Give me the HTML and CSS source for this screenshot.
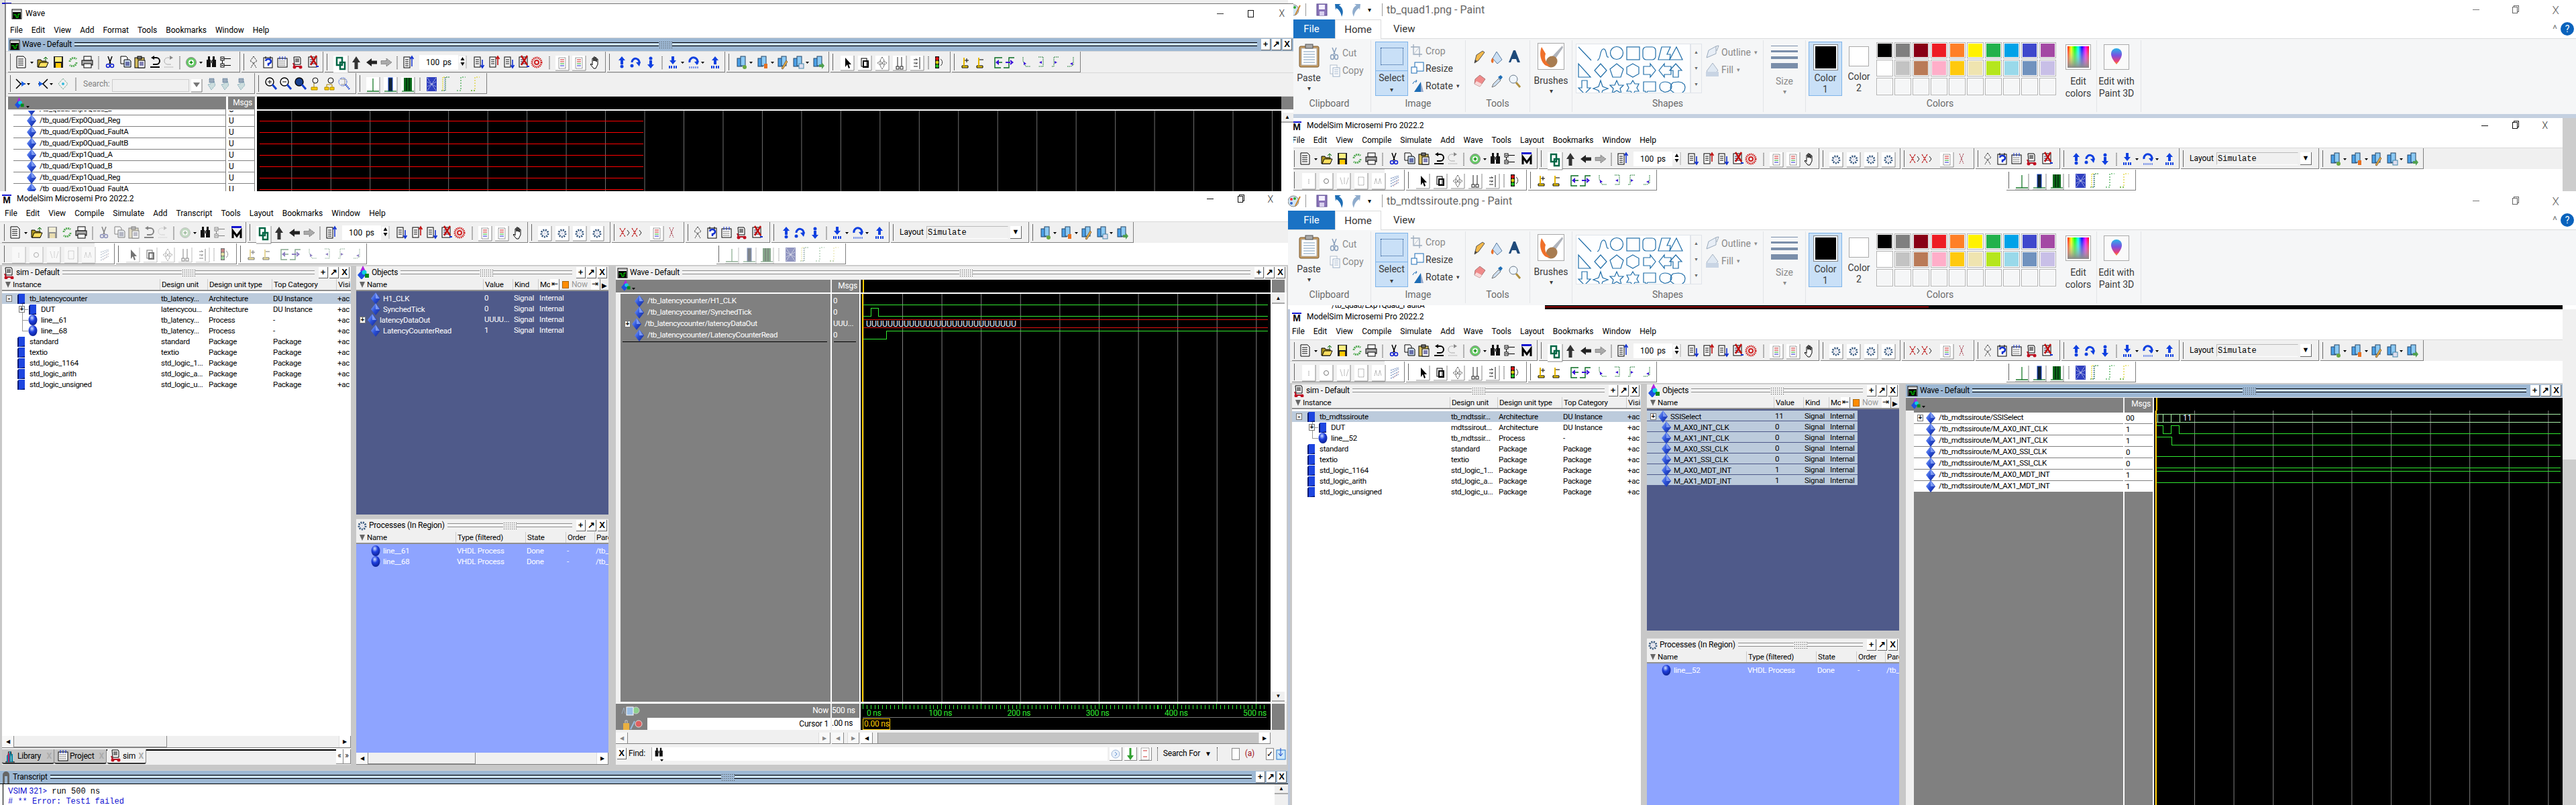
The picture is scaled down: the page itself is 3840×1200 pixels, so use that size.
FILE: index.html
```html
<!DOCTYPE html>
<html lang="en">
<head>
<meta charset="utf-8">
<title>ModelSim and Paint windows</title>
<link rel="stylesheet" href="styles.css">
</head>
<body>
<svg class="defs" width="0" height="0" aria-hidden="true"><defs>
<linearGradient id="bl" x1="0" y1="0" x2="1" y2="1"><stop offset="0" stop-color="#8fb0ff"/><stop offset=".5" stop-color="#2a50d8"/><stop offset="1" stop-color="#14248a"/></linearGradient>
<radialGradient id="bb" cx=".4" cy=".3" r=".8"><stop offset="0" stop-color="#cfe0ff"/><stop offset=".4" stop-color="#2040e0"/><stop offset="1" stop-color="#081a80"/></radialGradient>
<linearGradient id="rb"><stop offset="0" stop-color="#f00"/><stop offset=".17" stop-color="#ff0"/><stop offset=".34" stop-color="#0f0"/><stop offset=".5" stop-color="#0ff"/><stop offset=".67" stop-color="#00f"/><stop offset=".84" stop-color="#f0f"/><stop offset="1" stop-color="#f00"/></linearGradient>
<linearGradient id="rg" x1="0" y1="0" x2="0" y2="1"><stop offset="0" stop-color="#fff" stop-opacity="0"/><stop offset="1" stop-color="#888"/></linearGradient>
<linearGradient id="p3" x1="0" y1="0" x2="0" y2="1"><stop offset="0" stop-color="#27b5e8"/><stop offset=".45" stop-color="#7a50e0"/><stop offset=".8" stop-color="#e8407a"/><stop offset="1" stop-color="#f9a020"/></linearGradient>

<g id="dia"><path d="M7 0L14 9L7 18L0 9Z" fill="url(#bl)"/><path d="M7 1L13 9H7Z" fill="#a8c0ff" opacity=".65"/></g>
<g id="ball"><ellipse cx="7" cy="8" rx="6.5" ry="8" fill="url(#bb)"/></g>
<g id="cube"><rect x="2" width="9" height="15" fill="#1e46e0"/><path d="M0 2L2 0V15H0Z" fill="#0a1a70"/><path d="M2 15L11 13V15Z" fill="#0a1a70"/></g>
<g id="objs"><path d="M8 0L12 8H4Z" fill="#b020e0"/><path d="M6 7L12 14L6 21L0 14Z" fill="#1e50e0"/><circle cx="10" cy="10" r="3.5" fill="#10d0e0"/><rect x="11" y="12" width="6" height="6" fill="#0a8a1a"/></g>
<g id="wic"><rect width="14" height="14" fill="#fff" stroke="#000"/><rect x="1" y="4" width="12" height="10" fill="#000"/><path d="M2 8h4v4h3V7h3" stroke="#0f0" fill="none"/><path d="M1 2h12" stroke="#888"/></g>
<g id="cart"><path d="M3 1h9l1 2v9H4z" fill="#fff" stroke="#000"/><path d="M5 4h6M5 6h6M5 8h6" stroke="#000"/><path d="M2 10l2 5h9" stroke="#b01020" stroke-width="2" fill="none"/><circle cx="4" cy="16" r="2.5" fill="#c01020"/><circle cx="13" cy="16" r="2.5" fill="#c01020"/></g>
<g id="gearp"><circle cx="7" cy="10" r="5" fill="none" stroke="#3a5a80" stroke-width="3" stroke-dasharray="2 1.4"/><circle cx="7" cy="10" r="2" fill="#dde"/></g>

<g id="dd"><path d="M0 0h5L2.5 3z" fill="#000"/></g>
<g id="vs"><path d="M0 0v19" stroke="#000" stroke-dasharray="1 1"/></g>
<g id="doc"><path d="M2 1h10l3 3v14H2z" fill="#fff" stroke="#000"/><path d="M4 5h8M4 8h8M4 11h8M4 14h8" stroke="#000"/></g>
<g id="open"><path d="M1 17V6h5l1 2h7v9z" fill="#b09820" stroke="#000"/><path d="M2 17l3-7h12l-3 7z" fill="#ffe060" stroke="#000"/><path d="M10 5l3-3 3 3M13 2v5" stroke="#060" fill="none"/></g>
<g id="save"><rect x="2" y="1" width="14" height="17" fill="#222"/><rect x="4" y="2" width="10" height="7" fill="#ffef80"/><rect x="5" y="11" width="8" height="7" fill="#ffc800"/></g>
<g id="reload"><path d="M4 9a6 6 0 0 1 10-4M14 10a6 6 0 0 1-10 4" stroke="#50a850" stroke-width="3" stroke-dasharray="2 1" fill="none"/></g>
<g id="print"><rect x="4" y="1" width="11" height="6" fill="#fff" stroke="#000"/><rect x="1" y="7" width="16" height="7" fill="#aaa" stroke="#000"/><rect x="4" y="12" width="11" height="6" fill="#fff" stroke="#000"/></g>
<g id="cut"><path d="M6 1l4 11M12 1L8 12" stroke="#000" stroke-width="1.5"/><circle cx="6" cy="15" r="2.5" fill="none" stroke="#1020d0" stroke-width="1.5"/><circle cx="12" cy="15" r="2.5" fill="none" stroke="#1020d0" stroke-width="1.5"/></g>
<g id="copy"><path d="M2 1h8l2 2v9H2z" fill="#fff" stroke="#000"/><path d="M7 6h8l2 2v9H7z" fill="#cde" stroke="#000"/><path d="M9 10h6M9 12h6M9 14h6" stroke="#006"/></g>
<g id="paste"><rect x="2" y="3" width="14" height="15" fill="#d8c060" stroke="#000"/><rect x="6" y="1" width="6" height="4" fill="#777" stroke="#000"/><rect x="7" y="7" width="10" height="11" fill="#fff" stroke="#000"/><path d="M9 10h6M9 12h6M9 14h6" stroke="#006"/></g>
<g id="undo"><path d="M7 3H11A5 5 0 0 1 11 13H6" fill="none" stroke="#000" stroke-width="2"/><path d="M8 0v6L3 3z" fill="#000"/><path d="M2 17h14" stroke="#000" stroke-width="2"/></g>
<g id="redo"><path d="M11 3H7A5 5 0 0 0 7 13H12" fill="none" stroke="#666" stroke-dasharray="1 1"/><path d="M10 0v6l5-3z" fill="#888"/><path d="M2 17h14" stroke="#888" stroke-dasharray="1 1"/></g>
<g id="add"><circle cx="9" cy="10" r="7.5" fill="#66cc66" stroke="#888"/><circle cx="9" cy="10" r="4" fill="#fff"/><path d="M9 7.5v5M6.5 10h5" stroke="#080" stroke-width="1.5"/></g>
<g id="bino"><rect x="2" y="6" width="6" height="11" fill="#111"/><rect x="10" y="6" width="6" height="11" fill="#111"/><rect x="4" y="1" width="3" height="6" fill="#111"/><rect x="11" y="1" width="3" height="6" fill="#111"/><rect x="7" y="7" width="4" height="4" fill="#555"/></g>
<g id="tree"><rect x="1" y="2" width="5" height="5" fill="#fff" stroke="#000"/><rect x="1" y="12" width="5" height="5" fill="#fff" stroke="#000"/><path d="M3.5 7v5M6 4.5h10M6 14.5h10M2 4.5h3M2 14.5h3" stroke="#000"/></g>
<g id="mlg"><rect x="1" y="0" width="15" height="3" fill="#1414d0"/><path d="M3 18V7l6 8 6-8v11" fill="none" stroke="#000" stroke-width="3"/></g>

<g id="spark"><path d="M9 1L4 8l5 3-4 7M9 1l5 7-5 3 4 7" fill="none" stroke="#222" stroke-dasharray="2 1"/></g>
<g id="help"><rect x="2" y="3" width="13" height="15" fill="#fff" stroke="#000"/><path d="M5 1v4M12 1v4" stroke="#000"/><path d="M5 8a4 3.5 0 1 1 4 4v3" fill="none" stroke="#1030d0" stroke-width="2.5"/></g>
<g id="cal"><rect x="2" y="4" width="14" height="13" fill="#fff" stroke="#000"/><path d="M4 8h10M4 11h10M4 14h10" stroke="#000" stroke-dasharray="1 1"/><path d="M5 1v5M9 1v5M13 1v5" stroke="#1030d0"/></g>
<g id="xdoc"><rect x="2" y="2" width="12" height="15" fill="#fff" stroke="#000"/><path d="M4 6h8M4 9h8M4 12h8" stroke="#003"/><path d="M5 0l9 14M14 0L5 14" stroke="#c01010" stroke-width="2.5"/><path d="M13 16h4" stroke="#1030d0" stroke-width="2"/></g>

<g id="chain"><rect width="22" height="26" x="-2" y="-2" fill="#fff"/><path d="M20-2V24H-2" fill="none" stroke="#888"/><rect x="3" y="1" width="8" height="11" fill="none" stroke="#064" stroke-width="2.5"/><rect x="8" y="8" width="7" height="10" fill="none" stroke="#064" stroke-width="2.5"/></g>
<g id="up"><path d="M9 1l6 9h-3.5v10h-5V10H3z" fill="#333"/></g>
<g id="lf"><path d="M1 10l8-6v3.5h8v5H9V16z" fill="#222"/></g>
<g id="rt"><path d="M17 10L9 4v3.5H1v5h8V16z" fill="#aaa" stroke="#555" stroke-dasharray="1 1"/></g>
<g id="dcol"><rect x="2" y="2" width="9" height="16" fill="#fff" stroke="#000"/><path d="M4 6h5M4 9h5M4 12h5M4 15h5" stroke="#000"/><path d="M14 16V3M11.5 5L14 1l2.5 4" fill="none" stroke="#1030d0" stroke-width="1.5"/></g>
<g id="sdn"><rect x="2" y="2" width="9" height="15" fill="#fff" stroke="#000"/><path d="M4 6h5M4 9h5M4 12h5" stroke="#000"/><path d="M14 6v11M11.5 14l2.5 4 2.5-4" fill="none" stroke="#1030d0" stroke-width="1.6"/></g>
<g id="sup"><rect x="2" y="2" width="9" height="15" fill="#fff" stroke="#000"/><path d="M4 6h5M4 9h5M4 12h5" stroke="#000"/><path d="M14 14V3M11.5 5L14 1l2.5 4" fill="none" stroke="#c01010" stroke-width="1.6"/></g>
<g id="redc"><circle cx="9" cy="10" r="7" fill="none" stroke="#d02020" stroke-width="3" stroke-dasharray="1.5 1"/><circle cx="9" cy="10" r="3" fill="none" stroke="#d02020" stroke-width="2"/></g>
<g id="wbt"><rect x="-1" width="20" height="22" fill="#fff"/><path d="M19 0V22H-1" fill="none" stroke="#888"/><rect x="4" y="3" width="10" height="16" fill="none" stroke="#444" stroke-dasharray="1 1"/><path d="M6 6h6M6 9h6" stroke="#c22"/><path d="M6 12h6" stroke="#2a2"/><path d="M6 15h6" stroke="#22c"/></g>
<g id="hand"><path d="M5 9V4h2v4V2h2v6V3h2v6V5h2v8l-3 6H7l-5-6 1-1 2 2z" fill="#fff" stroke="#000"/></g>
<g id="gb"><rect x="-1" width="20" height="22" fill="#fff"/><path d="M19 0V22H-1" fill="none" stroke="#888"/><use href="#gearp" x="2" y="1"/></g>
<g id="xx"><path d="M2 3l8 13M10 3L2 16" stroke="#c02020" stroke-width="1.3" stroke-dasharray="3 1"/><path d="M13 6l3 4-3 4" fill="none" stroke="#222"/></g>

<g id="dbl"><circle cx="9" cy="16" r="2.5" fill="#1040e0"/><path d="M9 1l5 6h-3v6H7V7H4z" fill="#1040e0"/></g>
<g id="ubl"><path d="M4 10a5.5 5.5 0 1 1 10 3" fill="none" stroke="#1040e0" stroke-width="3"/><path d="M10 10l5 6 2-7z" fill="#1040e0"/><circle cx="4" cy="15" r="2.5" fill="#1040e0"/></g>
<g id="dbar"><path d="M9 1l5 6h-3v6H7V7H4z" fill="#1040e0" transform="rotate(180 9 7)"/><path d="M4 15v4M7 15v4M11 15v4M14 15v4" stroke="#1040e0" stroke-width="2"/></g>
<g id="ubar"><path d="M9 1l5 6h-3v6H7V7H4z" fill="#1040e0"/><path d="M4 15v4M7 15v4M11 15v4M14 15v4" stroke="#1040e0" stroke-width="2"/></g>
<g id="cbar"><path d="M3 10a6 6 0 1 1 11 2" fill="none" stroke="#1040e0" stroke-width="3"/><path d="M10 9l4 5 3-6z" fill="#1040e0"/><path d="M3 16v3M6 16v3M9 16v3M12 16v3M15 16v3" stroke="#1040e0"/></g>

<g id="lay"><rect x="1" y="3" width="7" height="12" fill="#4aa0e8" stroke="#246"/><rect x="6" y="0" width="7" height="14" fill="#8ccaf4" stroke="#246"/></g>

<g id="ptr"><rect x="-1" width="20" height="22" fill="#fff"/><path d="M19 0V22H-1" fill="none" stroke="#888"/><path d="M6 3v14l3-4 2 6 2-1-2-5h4z" fill="#000"/></g>
<g id="zbox"><rect x="-1" width="20" height="22" fill="#fff"/><path d="M19 0V22H-1" fill="none" stroke="#888"/><rect x="4" y="4" width="8" height="12" fill="none" stroke="#000"/><rect x="7" y="8" width="7" height="9" fill="none" stroke="#000" stroke-width="2"/></g>
<g id="mv"><rect x="-1" width="20" height="22" fill="#fff"/><path d="M19 0V22H-1" fill="none" stroke="#888"/><path d="M9 2l3 5-3 4-3-4zM9 11l3 4-3 5-3-5zM2 11l4-3v6zM16 11l-4-3v6z" fill="#fff" stroke="#333" stroke-dasharray="1 .6"/></g>
<g id="bars"><rect x="-1" width="20" height="22" fill="#fff"/><path d="M19 0V22H-1" fill="none" stroke="#888"/><path d="M6 2v14M12 2v14" stroke="#222"/><rect x="4" y="16" width="4" height="4" fill="none" stroke="#222"/><rect x="10" y="16" width="4" height="4" fill="none" stroke="#222"/></g>
<g id="lns"><rect x="-1" width="20" height="22" fill="#fff"/><path d="M19 0V22H-1" fill="none" stroke="#888"/><path d="M4 6h6M4 11h6M4 16h6M13 2v18" stroke="#222"/><path d="M9 6l-2-1.500M9 11l-2 1.500" stroke="#222"/></g>
<g id="tl"><rect x="3" y="1" width="6" height="18" fill="#111"/><circle cx="6" cy="4.500" r="2.400" fill="#e01010"/><circle cx="6" cy="10" r="2.400" fill="#d8d010"/><circle cx="6" cy="15.500" r="2.400" fill="#20c020"/><path d="M11 5a6 6 0 0 1 0 10" fill="none" stroke="#333"/></g>

<g id="fa"><path d="M3 18h9v-3H3zM6 15V3M6 7h7M10 4v6" stroke="#000" fill="#ffd800"/><path d="M6 15V3" stroke="#e8b800" stroke-width="2"/></g>
<g id="fb"><path d="M3 18h9v-3H3zM6 15V3M6 6h7" stroke="#000" fill="#ffd800"/><path d="M6 15V3" stroke="#e8b800" stroke-width="2"/></g>
<g id="gl"><path d="M15 3H4v15h9M7 10h8" stroke="#086c20" stroke-width="1.400" fill="none"/><path d="M5 10l5-4v8z" fill="#3a10d8"/></g>
<g id="gr"><path d="M1 18h8V3h8" stroke="#086c20" stroke-width="1.400" fill="none"/><path d="M16 10l-5-4v8zM4 9h8v2H4z" fill="#3a10d8"/></g>
<g id="d1"><path d="M4 2v6l4 8h7" fill="none" stroke="#086c20" stroke-dasharray="1.500 1"/><path d="M5 9l4 3-4 2z" fill="#3a10d8"/></g>
<g id="d2"><path d="M6 2h7v14H6" fill="none" stroke="#086c20" stroke-dasharray="1.500 1"/><path d="M7 10l4-2v4z" fill="#3a10d8"/></g>
<g id="d3"><path d="M14 2H7v14H3" fill="none" stroke="#086c20" stroke-dasharray="1.500 1"/><path d="M12 10L8 8v4z" fill="#3a10d8"/></g>
<g id="d4"><path d="M14 2v12l-4 2H4" fill="none" stroke="#086c20" stroke-dasharray="1.500 1"/><path d="M9 12l4-2v4z" fill="#3a10d8"/></g>

<g id="pb"><rect x="-1" width="20" height="24" fill="#fff"/><path d="M19 0V24H-1" fill="none" stroke="#888"/></g>
<g id="hatch"><path d="M3 6l12-4M3 10l12-6M3 14l12-6M3 18l12-6" stroke="#8aa0c8" stroke-width="1.500" stroke-dasharray="2 1"/><path d="M7 18l9-11" stroke="#d88" stroke-dasharray="1 1"/></g>

<g id="inw"><path d="M2 3l7 7-7 7M8 10h8" fill="none" stroke="#000" stroke-width="1.500"/><path d="M10 6l6 4-6 4z" fill="#1860e8"/></g>
<g id="outw"><path d="M16 3L9 10l7 7M2 10h8" fill="none" stroke="#000" stroke-width="1.500"/><path d="M3 6l6 4-6 4z" fill="#1860e8"/></g>
<g id="dot3"><path d="M9 2l7 8-7 8-7-8z" fill="none" stroke="#486" stroke-dasharray="1 1"/><circle cx="9" cy="10" r="2" fill="#3bd"/></g>
<g id="zi"><circle cx="7" cy="7" r="6" fill="#fff" stroke="#000" stroke-width="1.400"/><path d="M4 7h6M7 4v6" stroke="#000"/><path d="M11 11l6 7" stroke="#1440d0" stroke-width="3"/></g>
<g id="zo"><circle cx="7" cy="7" r="6" fill="#fff" stroke="#000" stroke-width="1.400"/><path d="M4 7h6" stroke="#000"/><path d="M11 11l6 7" stroke="#1440d0" stroke-width="3"/></g>
<g id="zf"><circle cx="7" cy="7" r="6" fill="#184090" stroke="#000" stroke-width="1.400"/><path d="M11 11l6 7" stroke="#1440d0" stroke-width="3"/></g>
<g id="zc"><circle cx="9" cy="5" r="4" fill="#fff" stroke="#000"/><path d="M7 9v6M3 15h9v4H3z" fill="#fc0" stroke="#a80"/></g>
<g id="zd"><circle cx="10" cy="5" r="4" fill="#fff" stroke="#000"/><path d="M4 11h8M4 11v4M12 11v4M1 15h6v4H1zM9 15h6v4H9z" fill="#fc0" stroke="#a80"/></g>
<g id="zs"><circle cx="7" cy="7" r="6" fill="none" stroke="#1440d0" stroke-dasharray="1.500 1"/><path d="M11 11l6 7" stroke="#1440d0" stroke-dasharray="1.500 1" stroke-width="2.500"/><path d="M4 3h6v8H4" fill="none" stroke="#333" stroke-dasharray="1 1"/></g>
<g id="sb1"><path d="M5 11l5 8 6-7-2-6-3 1-2 3z" fill="#cdd" stroke="#69a" stroke-dasharray="1 1"/><path d="M7 2h7v6H7z" fill="#9ab" stroke="#468" stroke-dasharray="1 1"/></g>

<g id="wa"><rect x="-1" width="20" height="24" fill="#fff"/><path d="M19 0V24H-1" fill="none" stroke="#888"/><path d="M9 2v19M0 21h18" stroke="#1a7a2a" stroke-width="1.300"/></g>
<g id="wb"><rect x="-1" width="20" height="24" fill="#fff"/><path d="M19 0V24H-1" fill="none" stroke="#888"/><rect x="6" y="1" width="6" height="20" fill="#123" stroke="#1444c8"/><path d="M0 21h18" stroke="#1a7a2a" stroke-width="1.300"/></g>
<g id="wc"><rect x="-1" width="20" height="24" fill="#fff"/><path d="M19 0V24H-1" fill="none" stroke="#888"/><rect x="3" y="1" width="12" height="20" fill="#0a6a1a"/><path d="M7 1v20M11 1v20" stroke="#000"/><path d="M0 21h18" stroke="#1a7a2a" stroke-width="1.300"/></g>
<g id="wh"><rect x="2" y="2" width="15" height="21" fill="#3040c0"/><path d="M3 3l13 19M16 3L3 22M3 9l13 7M16 9L3 16" stroke="#fff" stroke-dasharray="1 1"/></g>
<g id="we"><path d="M3 22h6V2h7" fill="none" stroke="#1a7a2a" stroke-dasharray="2 1"/><path d="M5 22V2h3M14 22" fill="none" stroke="#e0d000" stroke-dasharray="2 1"/><path d="M8 3v19" stroke="#2040d0" stroke-dasharray="1 2"/></g>
<g id="wf"><path d="M3 22h6V2h7" fill="none" stroke="#1a9a2a" stroke-dasharray="2 2"/></g>
<g id="wgg"><path d="M3 22h6V2h7" fill="none" stroke="#d8c800" stroke-dasharray="2 2"/><path d="M3 22h6" stroke="#1a9a2a" stroke-dasharray="2 2"/></g>

<g id="g-file"><use href="#doc" x="11" y="6"/><use href="#dd" x="33" y="15"/><use href="#open" x="43" y="6"/><use href="#save" x="66" y="6"/><use href="#reload" x="88" y="6"/><use href="#print" x="109" y="6"/><use href="#vs" x="135" y="7"/><use href="#cut" x="143" y="6"/><use href="#copy" x="166" y="6"/><use href="#paste" x="187" y="6"/><use href="#undo" x="210" y="6"/><use href="#redo" x="231" y="6"/><use href="#vs" x="256" y="7"/><use href="#add" x="264" y="6"/><use href="#dd" x="285" y="15"/><use href="#bino" x="294" y="6"/><use href="#tree" x="316" y="6"/></g>
<g id="g-filed"><use href="#doc" x="11" y="6"/><use href="#dd" x="33" y="15"/><use href="#open" x="43" y="6"/><g class="gh"><use href="#save" x="66" y="6"/></g><use href="#reload" x="88" y="6"/><use href="#print" x="109" y="6"/><use href="#vs" x="135" y="7"/><g class="gh"><use href="#cut" x="143" y="6"/><use href="#copy" x="166" y="6"/><use href="#paste" x="187" y="6"/><use href="#undo" x="210" y="6"/><use href="#redo" x="231" y="6"/></g><use href="#vs" x="256" y="7"/><g class="gh"><use href="#add" x="264" y="6"/></g><use href="#dd" x="285" y="15"/><use href="#bino" x="294" y="6"/><g class="gh"><use href="#tree" x="316" y="6"/></g></g>
<g id="g-help"><use href="#spark" x="9" y="6"/><use href="#help" x="31" y="6"/><use href="#cal" x="52" y="6"/><use href="#cart" x="75" y="7"/><use href="#xdoc" x="98" y="6"/></g>
<g id="g-nav1"><use href="#chain" x="15" y="8"/><use href="#up" x="38" y="6"/><use href="#lf" x="61" y="6"/><use href="#rt" x="83" y="6"/><use href="#vs" x="108" y="7"/><use href="#dcol" x="116" y="6"/></g>
<g id="g-nav2"><rect x="1" y="7" width="11" height="9" fill="#fff"/><path d="M6.500 8l-3 5h6zM3.500 16h6l-3 5z" fill="#000"/><path d="M12 6v19" stroke="#aaa"/><use href="#sdn" x="22" y="6"/><use href="#sup" x="45" y="6"/><use href="#sdn" x="67" y="6"/><use href="#xdoc" x="89" y="6"/><use href="#redc" x="108" y="6"/><use href="#vs" x="136" y="7"/><use href="#wbt" x="146" y="6"/><use href="#wbt" x="171" y="6"/><use href="#hand" x="195" y="6"/></g>
<g id="g-step"><use href="#dbl" x="13" y="6"/><use href="#ubl" x="33" y="6"/><use href="#dbl" x="56" y="6" transform="rotate(180 65 16)"/><use href="#vs" x="82" y="7"/><use href="#dbar" x="89" y="6"/><use href="#dd" x="110" y="15"/><use href="#cbar" x="120" y="6"/><use href="#dd" x="140" y="15"/><use href="#ubar" x="152" y="6"/></g>
<g id="g-lay"><use href="#lay" x="15" y="7"/><circle cx="27" cy="23" r="3" fill="#6aa840"/><use href="#dd" x="34" y="15"/><use href="#lay" x="46" y="7"/><rect x="56" y="18" width="5" height="7" fill="#e87020"/><use href="#dd" x="66" y="15"/><use href="#lay" x="76" y="7"/><path d="M82 25l7-12 2 2-7 11z" fill="#e8b040" stroke="#864"/><use href="#lay" x="99" y="7"/><rect x="108" y="18" width="7" height="7" fill="#dde" stroke="#48a"/><use href="#dd" x="118" y="15"/><use href="#lay" x="129" y="7"/><path d="M138 19h4v-3l4 5-4 5v-3h-4z" fill="#50a050"/></g>
<g id="g-sel"><use href="#ptr" x="16" y="6"/><use href="#zbox" x="42" y="6"/><use href="#mv" x="68" y="6"/><use href="#bars" x="94" y="6"/><use href="#lns" x="120" y="6"/><use href="#vs" x="146" y="7"/><use href="#tl" x="153" y="6"/></g>
<g id="g-flag"><use href="#fa" x="12" y="6"/><use href="#fb" x="34" y="6"/><use href="#gl" x="60" y="6"/><use href="#gr" x="76" y="6"/><use href="#d1" x="102" y="6"/><use href="#d2" x="123" y="6"/><use href="#d3" x="145" y="6"/><use href="#d4" x="167" y="6"/></g>
<g id="g-search"><use href="#inw" x="10" y="6"/><use href="#dd" x="28" y="15"/><use href="#outw" x="43" y="6"/><use href="#dd" x="62" y="15"/><use href="#dot3" x="73" y="6"/><use href="#vs" x="101" y="7"/></g>
<g id="g-sr2"><rect x="0" y="9" width="16" height="19" fill="#fff"/><path d="M16 9v19H0" fill="none" stroke="#777"/><path d="M3 14h10l-5 7z" fill="#777"/><use href="#sb1" x="20" y="6"/><use href="#sb1" x="40" y="6"/><use href="#sb1" x="64" y="6"/></g>
<g id="g-zoom"><use href="#zi" x="13" y="6"/><use href="#zo" x="35" y="6"/><use href="#zf" x="57" y="6"/><use href="#zc" x="79" y="6"/><use href="#zd" x="101" y="6"/><use href="#zs" x="122" y="6"/></g>
<g id="g-wave"><use href="#wa" x="14" y="6"/><use href="#wb" x="40" y="6"/><use href="#wc" x="66" y="6"/><use href="#vs" x="93" y="7"/><use href="#wh" x="101" y="4"/><use href="#we" x="122" y="4"/><use href="#wf" x="145" y="4"/><use href="#wgg" x="166" y="4"/></g>
<g id="g-gear"><use href="#gb" x="14" y="6"/><use href="#gb" x="40" y="6"/><use href="#gb" x="66" y="6"/><use href="#gb" x="92" y="6"/></g>
<g id="g-xx"><use href="#xx" x="10" y="6"/><use href="#xx" x="28" y="6"/><use href="#wbt" x="58" y="6"/><path d="M86 8l6 15M92 8l-6 15" stroke="#a03040" stroke-dasharray="2 1"/></g>
<g id="g-pins"><use href="#pb" x="16" y="5"/><path d="M25 14v8" stroke="#777" stroke-dasharray="1 1"/><use href="#pb" x="42" y="5"/><circle cx="51" cy="17" r="3.500" fill="none" stroke="#777"/><use href="#pb" x="68" y="5"/><path d="M72 12l3 10M78 12v10M84 12l-3 10" fill="none" stroke="#777" stroke-dasharray="1 1"/><use href="#pb" x="94" y="5"/><rect x="99" y="11" width="8" height="12" fill="none" stroke="#777" stroke-dasharray="1 1"/><use href="#pb" x="120" y="5"/><path d="M123 21l2-8 2 8M129 21l2-8 2 8" fill="none" stroke="#777" stroke-dasharray="1 1"/><use href="#hatch" x="144" y="7"/></g>

<g id="p-app"><circle cx="8" cy="8" r="8" fill="#cfe4f4" stroke="#888"/><circle cx="5" cy="5" r="2" fill="#e33"/><circle cx="10" cy="4" r="2" fill="#3a3"/><circle cx="5" cy="11" r="2" fill="#36c"/><path d="M11 15l7-14" stroke="#c83" stroke-width="2"/></g>
<g id="p-save"><rect x="1" y="1" width="15" height="17" fill="#8a74b8" stroke="#5a4a90"/><rect x="4" y="2" width="9" height="7" fill="#f4f0ff"/><rect x="5" y="12" width="7" height="6" fill="#d8d0ee"/></g>
<g id="p-undo"><path d="M3 1h9l-3 2c5 3 8 9 4 17-1-6-4-11-8-13l-1 3z" fill="#1d6db5"/></g>
<g id="p-redo"><path d="M15 1H6l3 2C4 6 1 12 5 20c1-6 4-11 8-13l1 3z" fill="#8faccd"/></g>
<g id="p-paste"><rect x="1" y="3" width="29" height="31" rx="2" fill="#c49a60" stroke="#7a5a30"/><rect x="4" y="6" width="23" height="25" fill="#fff" stroke="#aaa"/><path d="M7 11h17M7 15h17M7 19h17M7 23h17M7 27h17" stroke="#7a9ab8"/><rect x="10" y="0" width="11" height="6" fill="#aaa" stroke="#555"/></g>
<g id="p-cut"><path d="M4 1l4 10M10 1L6 11" stroke="#8aa0bc" stroke-width="1.500"/><ellipse cx="4" cy="15" rx="2.500" ry="3.500" fill="none" stroke="#8aa0bc" stroke-width="1.500"/><ellipse cx="10" cy="15" rx="2.500" ry="3.500" fill="none" stroke="#8aa0bc" stroke-width="1.500"/></g>
<g id="p-copy"><rect x="1" y="1" width="10" height="13" fill="#fff" stroke="#b0bccc"/><rect x="5" y="5" width="10" height="13" fill="#fff" stroke="#9cb0c8"/><path d="M7 8h6M7 11h6M7 14h6" stroke="#9cb0c8"/></g>
<g id="p-crop"><path d="M4 0v15h13M0 4h13v15" fill="none" stroke="#9aaabc" stroke-width="1.300"/><path d="M4 15L13 4" stroke="#bcc6d2"/></g>
<g id="p-resize"><rect x="6" y="1" width="13" height="13" fill="#fff" stroke="#1d6db5"/><rect x="1" y="8" width="8" height="9" fill="#fff" stroke="#1d6db5"/></g>
<g id="p-rotate"><path d="M5 19L15 4v15z" fill="#1d6db5"/><path d="M15 4l4 15h-4z" fill="#9ac"/><path d="M3 7c1-3 3-4 5-4M8 1l1 2-2 2" fill="none" stroke="#1d6db5"/></g>
<g id="p-pencil"><path d="M3 19l3-12L15 1l3 2-9 12z" fill="#f2b84a" stroke="#555"/><path d="M3 19l1-5 3 2z" fill="#444"/></g>
<g id="p-fill"><path d="M9 2l8 12-7 6-7-8z" fill="#cce0f4" stroke="#5a7ca0"/><path d="M3 11c-3 3-3 7 0 8 2-1 2-5 0-8z" fill="#e8702a"/></g>
<g id="p-a"><path d="M0 18L7 0h3l7 18h-4l-2-5H5l-2 5z" fill="#1f4a7a"/></g>
<g id="p-erase"><path d="M4 7l7-6 8 6-8 11-8-4z" fill="#f08a8a" stroke="#a77"/><path d="M3 14l8 4 3-4-8-4z" fill="#f8d8d8"/></g>
<g id="p-pick"><path d="M2 19l2-5L12 6l3 3-8 8z" fill="#cde" stroke="#777"/><path d="M11 4l4-3 3 3-3 4z" fill="#1d6db5"/></g>
<g id="p-mag"><circle cx="7" cy="7" r="6" fill="#f0f6fc" stroke="#678"/><path d="M11 12l6 7" stroke="#b09040" stroke-width="3"/></g>
<g id="p-brush"><rect x=".500" y=".500" width="39" height="39" fill="#fff" stroke="#a8a8a8"/><path d="M37 4L21 21l4 5 13-19z" fill="#b0b4bc"/><ellipse cx="21" cy="28" rx="9" ry="8" fill="#a87c50" transform="rotate(-40 21 28)"/><path d="M6 6c-3 8-3 18 4 26 3 3 7 3 9 2-5-3-10-9-7-18z" fill="#f0702a"/></g>
<g id="p-out"><path d="M1 18l3-11L15 1v11z" fill="#e8eef6" stroke="#9aaabc"/><path d="M15 1l4-1-3 8" fill="none" stroke="#9aaabc"/></g>
<g id="p-fl"><path d="M10 0l8 11-5 5H5l-4-4z" fill="#dfe8f2" stroke="#a8b4c4"/><rect y="13" width="19" height="7" fill="#c8d4e4"/></g>
<g id="p-shapes" fill="none" stroke="#1f6da8" stroke-width="1.200">
<path d="M3 4l19 20M31 24c6-1 3-16 9-17s3 14 8 12"/><circle cx="60" cy="13" r="9.500"/><rect x="75" y="4" width="19" height="19"/><rect x="99" y="4" width="19" height="19" rx="5"/><path d="M122 23l5-19h13l-5 11h5l-1 8z"/><path d="M149 4l9 19h-19z"/>
<path d="M3 29v20h18zM36 29l9 10-9 10-9-10zM60 29l10 8-4 12H54l-4-12zM84 29l9 5v10l-9 5-9-5V34zM100 33h10v-4l8 10-8 10v-4h-10zM141 33h-10v-4l-8 10 8 10v-4h10zM148 29l9 10h-5v10h-8V39h-5z"/>
<path d="M8 54h8v11h5l-9 9-9-9h5zM36 54l3 9 8 3-8 3-3 9-3-9-8-3 8-3zM60 54l3 7h7l-5 5 2 7-7-4-7 4 2-7-5-5h7zM84 54l3 5h6l-3 6 3 5h-6l-3 6-3-6h-6l3-5-3-6h6zM100 56h18v14h-12l-3 5v-5h-3zM132 56c6 0 10 3 10 7s-4 8-9 8l-3 5 1-5c-4-1-7-4-7-8s3-7 8-7zM152 56l5 1 4 3 1 4-1 5-3 3-5 2-5-1-3-1-4-3-1-4 1-5 3-3z"/>
</g>
</defs></svg>

<div class="backstrip"><i class="dash"></i></div>
<div class="vtrack"></div>

<!-- Wave window -->
<section class="win w1">
  <div class="tb-title tall"><svg class="ttl-ic" width="16" height="16"><use href="#wic" x="1" y="1"/></svg><span>Wave</span><div class="ctl"><i class="mn"></i><i class="mx"></i><i class="cl">X</i></div></div>
  <nav class="menu tallm"><span>File</span><span>Edit</span><span>View</span><span>Add</span><span>Format</span><span>Tools</span><span>Bookmarks</span><span>Window</span><span>Help</span></nav>
  <div class="dockbar active w1-dock"><svg class="dk-ic" width="16" height="16"><use href="#wic" x="1" y="1"/></svg><span class="dk-t">Wave - Default</span><div class="grip"><b class="dots"></b></div><b class="db">+</b><b class="db">&#8599;</b><b class="db">X</b></div>
  <div class="tbr w1-r"><div class="tg g0"><svg width="345" height="31"><use href="#g-file"/></svg></div><div class="tg"><svg width="121" height="31"><use href="#g-help"/></svg></div>
    <div class="tg"><svg width="141" height="31"><use href="#g-nav1"/></svg><div class="spin">100 ps</div><svg width="219" height="31"><use href="#g-nav2"/></svg></div>
    <div class="tg"><svg width="175" height="31"><use href="#g-step"/></svg></div><div class="tg"><svg width="152" height="31"><use href="#g-lay"/></svg></div><div class="tg"><svg width="178" height="31"><use href="#g-sel"/></svg></div><div class="tg"><svg width="191" height="31"><use href="#g-flag"/></svg></div></div>
  <div class="tbr w1-r"><div class="tg"><svg width="112" height="31"><use href="#g-search"/></svg><div class="srch">Search:</div><div class="sinput"></div><svg width="94" height="31"><use href="#g-sr2"/></svg></div><div class="tg"><svg width="148" height="31"><use href="#g-zoom"/></svg></div><div class="tg"><svg width="192" height="31"><use href="#g-wave"/></svg></div></div>
  <div class="w1-gap"></div>
  <div class="w1-main">
    <div class="w1-names">
      <div class="w1-hd gray"><svg width="22" height="19"><use href="#objs" transform="translate(10 1) scale(.8)"/><use href="#dd" x="27" y="14"/></svg></div>
      <div class="w1-rows">
        <div class="w1r"><svg width="14" height="16"><use href="#dia" y="-1"/></svg><span>/tb_quad/Exp0Quad_B</span></div>
        <div class="w1r"><svg width="14" height="16"><use href="#dia" y="-1"/></svg><span>/tb_quad/Exp0Quad_Reg</span></div>
        <div class="w1r"><svg width="14" height="16"><use href="#dia" y="-1"/></svg><span>/tb_quad/Exp0Quad_FaultA</span></div>
        <div class="w1r"><svg width="14" height="16"><use href="#dia" y="-1"/></svg><span>/tb_quad/Exp0Quad_FaultB</span></div>
        <div class="w1r"><svg width="14" height="16"><use href="#dia" y="-1"/></svg><span>/tb_quad/Exp1Quad_A</span></div>
        <div class="w1r"><svg width="14" height="16"><use href="#dia" y="-1"/></svg><span>/tb_quad/Exp1Quad_B</span></div>
        <div class="w1r"><svg width="14" height="16"><use href="#dia" y="-1"/></svg><span>/tb_quad/Exp1Quad_Reg</span></div>
        <div class="w1r"><svg width="14" height="16"><use href="#dia" y="-1"/></svg><span>/tb_quad/Exp1Quad_FaultA</span></div>
      </div>
    </div>
    <div class="w1-msgs"><div class="w1-hd gray hdm">Msgs</div><div class="w1-rows"><div class="w1m">U</div><div class="w1m">U</div><div class="w1m">U</div><div class="w1m">U</div><div class="w1m">U</div><div class="w1m">U</div><div class="w1m">U</div><div class="w1m">U</div></div></div>
    <div class="w1-wave"><div class="w1-hd blk"></div><div class="grid1"><svg class="trace" width="1527" height="120" shape-rendering="crispEdges"><path d="M4 15H576M4 32H576M4 49H576M4 66H576M4 83H576M4 100H576M4 117H576" stroke="#f00"/></svg></div></div>
    <div class="w1-sb"><div class="w1-sbh"></div><i class="up-btn">&#9650;</i></div>
  </div>
</section>

<!-- Paint, first -->
<section class="win paint pa">
  <div class="p-title"><svg class="qa" width="20" height="20"><use href="#p-app" y="2"/></svg><i class="p-sep s1"></i><svg class="qs" width="17" height="19"><use href="#p-save"/></svg><svg class="qu" width="18" height="20"><use href="#p-undo"/></svg><svg class="qr" width="18" height="20"><use href="#p-redo"/></svg><span class="qmore">&#9662;</span><i class="p-sep s2"></i><span class="p-name">tb_quad1.png - Paint</span><div class="ctl pctl"><i class="mn"></i><i class="rs"></i><i class="cl">X</i></div></div>
  <div class="p-tabs"><span class="p-file">File</span><span class="p-home">Home</span><span class="p-view">View</span><i class="p-caret">&#94;</i><i class="p-help">?</i></div>
  <div class="ribbon">
    <div class="rg r1"><div class="rc"><div class="big bp"><svg width="31" height="36"><use href="#p-paste"/></svg><span>Paste</span><em>&#9662;</em></div><div class="sm"><p class="off"><svg width="16" height="19"><use href="#p-cut"/></svg>Cut</p><p class="off"><svg width="16" height="19"><use href="#p-copy"/></svg>Copy</p></div></div><div class="rl">Clipboard</div></div>
    <div class="rg r2"><div class="rc"><div class="sel"><div class="sel-top"><i></i></div><div class="sel-bot"><span>Select</span><em>&#9662;</em></div></div><div class="sm"><p class="off"><svg width="19" height="20"><use href="#p-crop"/></svg>Crop</p><p><svg width="19" height="20"><use href="#p-resize"/></svg>Resize</p><p><svg width="19" height="20"><use href="#p-rotate"/></svg>Rotate <em>&#9662;</em></p></div></div><div class="rl">Image</div></div>
    <div class="rg r3"><div class="rc tools"><svg width="20" height="20"><use href="#p-pencil"/></svg><svg width="20" height="20"><use href="#p-fill"/></svg><svg width="20" height="20"><use href="#p-a"/></svg><svg width="20" height="20"><use href="#p-erase"/></svg><svg width="20" height="20"><use href="#p-pick"/></svg><svg width="20" height="20"><use href="#p-mag"/></svg></div><div class="rl">Tools</div></div>
    <div class="rg r4"><div class="rc"><div class="big bb"><svg width="40" height="40"><use href="#p-brush"/></svg><span>Brushes</span><em>&#9662;</em></div></div><div class="rl"></div></div>
    <div class="rg r5"><div class="rc"><div class="gal"><svg width="170" height="78"><use href="#p-shapes"/></svg></div><div class="galb"><i>&#9650;</i><i>&#9660;</i><i>&#9660;</i></div><div class="sm out"><p class="off"><svg width="20" height="20"><use href="#p-out"/></svg>Outline <em>&#9662;</em></p><p class="off"><svg width="20" height="20"><use href="#p-fl"/></svg>Fill <em>&#9662;</em></p></div></div><div class="rl">Shapes</div></div>
    <div class="rg r6"><div class="rc"><div class="big bs off"><div class="lines"><i></i><i></i><i></i><i></i></div><span>Size</span><em>&#9662;</em></div></div><div class="rl"></div></div>
    <div class="rg r7"><div class="rc"><div class="col1"><i class="swat"></i><span>Color<br>1</span></div><div class="col2"><i class="swat2"></i><span>Color<br>2</span></div><div class="pal"><i></i><i></i><i></i><i></i><i></i><i></i><i></i><i></i><i></i><i></i><i></i><i></i><i></i><i></i><i></i><i></i><i></i><i></i><i></i><i></i><i></i><i></i><i></i><i></i><i></i><i></i><i></i><i></i><i></i><i></i></div><div class="big be"><svg width="38" height="38"><rect x=".5" y=".5" width="37" height="37" fill="#fff" stroke="#aaa"/><rect x="3" y="3" width="32" height="32" fill="url(#rb)"/><rect x="3" y="3" width="32" height="32" fill="url(#rg)"/></svg><span>Edit<br>colors</span></div></div><div class="rl rlc">Colors</div></div>
    <div class="rg r8"><div class="rc"><div class="big be"><svg width="38" height="38"><rect x=".5" y=".5" width="37" height="37" fill="#fafafa" stroke="#aaa"/><path d="M19 30c-5-6-8-11-8-16a8 8 0 0 1 16 0c0 5-3 10-8 16z" fill="url(#p3)"/></svg><span>Edit with<br>Paint 3D</span></div></div><div class="rl"></div></div>
  </div>
</section>

<!-- ModelSim background, right -->
<section class="win ms mb">
  <div class="ms-title"><span class="mlogo">M</span><span>ModelSim Microsemi Pro 2022.2</span><div class="ctl mctl"><i class="mn dark"></i><i class="rs dark"></i><i class="cl dark">X</i></div></div>
  <nav class="menu msm"><span>File</span><span>Edit</span><span>View</span><span>Compile</span><span>Simulate</span><span>Add</span><span>Wave</span><span>Tools</span><span>Layout</span><span>Bookmarks</span><span>Window</span><span>Help</span></nav>
  <div class="tbr"><div class="tg"><svg width="365" height="31"><use href="#g-file"/><use href="#mlg" x="341" y="6"/></svg></div><div class="tg"><svg width="141" height="31"><use href="#g-nav1"/></svg><div class="spin">100 ps</div><svg width="218" height="31"><use href="#g-nav2"/></svg></div><div class="tg"><svg width="118" height="31"><use href="#g-gear"/></svg></div><div class="tg"><svg width="107" height="31"><use href="#g-xx"/></svg></div><div class="tg"><svg width="125" height="31"><use href="#g-help"/></svg></div><div class="tg"><svg width="175" height="31"><use href="#g-step"/></svg></div><div class="tg lay"><span>Layout</span><div class="combo">Simulate</div><i class="cdrop">&#9660;</i></div><div class="tg"><svg width="153" height="31"><use href="#g-lay"/></svg></div></div>
  <div class="tbr r2"><div class="tg"><svg width="167" height="31"><use href="#g-pins"/></svg></div><div class="tg"><svg width="179" height="31"><use href="#g-sel"/></svg></div><div class="tg"><svg width="191" height="31"><use href="#g-flag"/></svg></div><div class="tg far"><svg width="192" height="31"><use href="#g-wave"/></svg></div></div>
</section>

<!-- Paint, second -->
<section class="win paint pb2">
  <div class="p-title"><svg class="qa" width="20" height="20"><use href="#p-app" y="2"/></svg><i class="p-sep s1"></i><svg class="qs" width="17" height="19"><use href="#p-save"/></svg><svg class="qu" width="18" height="20"><use href="#p-undo"/></svg><svg class="qr" width="18" height="20"><use href="#p-redo"/></svg><span class="qmore">&#9662;</span><i class="p-sep s2"></i><span class="p-name">tb_mdtssiroute.png - Paint</span><div class="ctl pctl"><i class="mn"></i><i class="rs"></i><i class="cl">X</i></div></div>
  <div class="p-tabs"><span class="p-file">File</span><span class="p-home">Home</span><span class="p-view">View</span><i class="p-caret">&#94;</i><i class="p-help">?</i></div>
  <div class="ribbon">
    <div class="rg r1"><div class="rc"><div class="big bp"><svg width="31" height="36"><use href="#p-paste"/></svg><span>Paste</span><em>&#9662;</em></div><div class="sm"><p class="off"><svg width="16" height="19"><use href="#p-cut"/></svg>Cut</p><p class="off"><svg width="16" height="19"><use href="#p-copy"/></svg>Copy</p></div></div><div class="rl">Clipboard</div></div>
    <div class="rg r2"><div class="rc"><div class="sel"><div class="sel-top"><i></i></div><div class="sel-bot"><span>Select</span><em>&#9662;</em></div></div><div class="sm"><p class="off"><svg width="19" height="20"><use href="#p-crop"/></svg>Crop</p><p><svg width="19" height="20"><use href="#p-resize"/></svg>Resize</p><p><svg width="19" height="20"><use href="#p-rotate"/></svg>Rotate <em>&#9662;</em></p></div></div><div class="rl">Image</div></div>
    <div class="rg r3"><div class="rc tools"><svg width="20" height="20"><use href="#p-pencil"/></svg><svg width="20" height="20"><use href="#p-fill"/></svg><svg width="20" height="20"><use href="#p-a"/></svg><svg width="20" height="20"><use href="#p-erase"/></svg><svg width="20" height="20"><use href="#p-pick"/></svg><svg width="20" height="20"><use href="#p-mag"/></svg></div><div class="rl">Tools</div></div>
    <div class="rg r4"><div class="rc"><div class="big bb"><svg width="40" height="40"><use href="#p-brush"/></svg><span>Brushes</span><em>&#9662;</em></div></div><div class="rl"></div></div>
    <div class="rg r5"><div class="rc"><div class="gal"><svg width="170" height="78"><use href="#p-shapes"/></svg></div><div class="galb"><i>&#9650;</i><i>&#9660;</i><i>&#9660;</i></div><div class="sm out"><p class="off"><svg width="20" height="20"><use href="#p-out"/></svg>Outline <em>&#9662;</em></p><p class="off"><svg width="20" height="20"><use href="#p-fl"/></svg>Fill <em>&#9662;</em></p></div></div><div class="rl">Shapes</div></div>
    <div class="rg r6"><div class="rc"><div class="big bs off"><div class="lines"><i></i><i></i><i></i><i></i></div><span>Size</span><em>&#9662;</em></div></div><div class="rl"></div></div>
    <div class="rg r7"><div class="rc"><div class="col1"><i class="swat"></i><span>Color<br>1</span></div><div class="col2"><i class="swat2"></i><span>Color<br>2</span></div><div class="pal"><i></i><i></i><i></i><i></i><i></i><i></i><i></i><i></i><i></i><i></i><i></i><i></i><i></i><i></i><i></i><i></i><i></i><i></i><i></i><i></i><i></i><i></i><i></i><i></i><i></i><i></i><i></i><i></i><i></i><i></i></div><div class="big be"><svg width="38" height="38"><rect x=".5" y=".5" width="37" height="37" fill="#fff" stroke="#aaa"/><rect x="3" y="3" width="32" height="32" fill="url(#rb)"/><rect x="3" y="3" width="32" height="32" fill="url(#rg)"/></svg><span>Edit<br>colors</span></div></div><div class="rl rlc">Colors</div></div>
    <div class="rg r8"><div class="rc"><div class="big be"><svg width="38" height="38"><rect x=".5" y=".5" width="37" height="37" fill="#fafafa" stroke="#aaa"/><path d="M19 30c-5-6-8-11-8-16a8 8 0 0 1 16 0c0 5-3 10-8 16z" fill="url(#p3)"/></svg><span>Edit with<br>Paint 3D</span></div></div><div class="rl"></div></div>
  </div>
</section>
<div class="sliver"><span>/tb_quad/Exp1Quad_FaultA</span><i></i></div>

<!-- ModelSim left -->
<section class="win ms ma">
  <div class="ms-title"><span class="mlogo">M</span><span>ModelSim Microsemi Pro 2022.2</span><div class="ctl mctl"><i class="mn dark"></i><i class="rs dark"></i><i class="cl dark">X</i></div></div>
  <nav class="menu msm"><span>File</span><span>Edit</span><span>View</span><span>Compile</span><span>Simulate</span><span>Add</span><span>Transcript</span><span>Tools</span><span>Layout</span><span>Bookmarks</span><span>Window</span><span>Help</span></nav>
  <div class="tbr"><div class="tg"><svg width="363" height="31"><use href="#g-filed"/><use href="#mlg" x="341" y="6"/></svg></div><div class="tg"><svg width="141" height="31"><use href="#g-nav1"/></svg><div class="spin">100 ps</div><svg width="218" height="31"><use href="#g-nav2"/></svg></div><div class="tg"><svg width="120" height="31"><use href="#g-gear"/></svg></div><div class="tg"><svg width="107" height="31"><use href="#g-xx"/></svg></div><div class="tg"><svg width="125" height="31"><use href="#g-help"/></svg></div><div class="tg"><svg width="175" height="31"><use href="#g-step"/></svg></div><div class="tg lay"><span>Layout</span><div class="combo">Simulate</div><i class="cdrop">&#9660;</i></div><div class="tg"><svg width="153" height="31"><use href="#g-lay"/></svg></div></div>
  <div class="tbr r2"><div class="tg dim"><svg width="167" height="31"><use href="#g-pins"/></svg></div><div class="tg dim"><svg width="179" height="31"><use href="#g-sel"/></svg></div><div class="tg dim"><svg width="191" height="31"><use href="#g-flag"/></svg></div><div class="tg far dim"><svg width="192" height="31"><use href="#g-wave"/></svg></div></div>
  <div class="dk">
    <div class="dk-row">
      <div class="pane sim">
        <div class="dockbar"><svg class="dk-ic" width="16" height="18"><use href="#cart"/></svg><span class="dk-t">sim - Default</span><div class="grip"><b class="dots"></b></div><b class="db">+</b><b class="db">&#8599;</b><b class="db">X</b></div>
        <div class="hd sc"><span><i class="flt"></i>Instance</span><span>Design unit</span><span>Design unit type</span><span>Top Category</span><span>Visi</span></div>
        <div class="sbody">
          <div class="r sc sel-r"><span class="t0"><i class="pm">-</i><svg class="cb" width="11" height="15"><use href="#cube"/></svg>tb_latencycounter</span><span>tb_latency...</span><span>Architecture</span><span>DU Instance</span><span>+ac</span></div>
          <div class="r sc"><span class="t1 lk"><i class="pm">+</i><svg class="cb" width="11" height="15"><use href="#cube"/></svg>DUT</span><span>latencycou...</span><span>Architecture</span><span>DU Instance</span><span>+ac</span></div>
          <div class="r sc"><span class="t1 lk"><svg class="bl" width="14" height="16"><use href="#ball"/></svg>line__61</span><span>tb_latency...</span><span>Process</span><span>-</span><span>+ac</span></div>
          <div class="r sc"><span class="t1 lk end"><svg class="bl" width="14" height="16"><use href="#ball"/></svg>line__68</span><span>tb_latency...</span><span>Process</span><span>-</span><span>+ac</span></div>
          <div class="r sc"><span class="t0"><svg class="cb" width="11" height="15"><use href="#cube"/></svg>standard</span><span>standard</span><span>Package</span><span>Package</span><span>+ac</span></div>
          <div class="r sc"><span class="t0"><svg class="cb" width="11" height="15"><use href="#cube"/></svg>textio</span><span>textio</span><span>Package</span><span>Package</span><span>+ac</span></div>
          <div class="r sc"><span class="t0"><svg class="cb" width="11" height="15"><use href="#cube"/></svg>std_logic_1164</span><span>std_logic_1...</span><span>Package</span><span>Package</span><span>+ac</span></div>
          <div class="r sc"><span class="t0"><svg class="cb" width="11" height="15"><use href="#cube"/></svg>std_logic_arith</span><span>std_logic_a...</span><span>Package</span><span>Package</span><span>+ac</span></div>
          <div class="r sc"><span class="t0"><svg class="cb" width="11" height="15"><use href="#cube"/></svg>std_logic_unsigned</span><span>std_logic_u...</span><span>Package</span><span>Package</span><span>+ac</span></div>
        </div>
        <div class="hsb"><i class="la">&#9664;</i><i class="th th-sim"></i><i class="ra">&#9654;</i></div>
        <div class="tabs"><span class="tab"><svg width="16" height="20"><path d="M1 19h14M3 19L6 3M12 19L9 3" stroke="#000" fill="none"/><path d="M4 19V9M8 19V3M11 19V7" stroke="#08a" stroke-width="2"/><path d="M6 19V6" stroke="#c02060" stroke-width="2"/></svg>Library<i>X</i></span><span class="tab"><svg width="16" height="20"><use href="#cal" /></svg>Project<i>X</i></span><span class="tab act"><svg width="16" height="20"><use href="#cart"/></svg>sim<i>X</i></span><b class="tabfill"></b><i class="tscr">&#171;</i><i class="tscr">&#187;</i></div>
      </div>
      <div class="oc oca">
        <div class="pane ob">
          <div class="dockbar"><svg class="dk-ic" width="18" height="22"><use href="#objs"/></svg><span class="dk-t">Objects</span><div class="grip"><b class="dots"></b></div><b class="db">+</b><b class="db">&#8599;</b><b class="db">X</b></div>
          <div class="hd oc-g rel"><span><i class="flt"></i>Name</span><span>Value</span><span>Kind</span><span>Mo</span><div class="nowbar"><i>&#8676;</i><i class="ord"></i><span>Now</span><i>&#8677;</i></div><i class="nowarr">&#9654;</i></div>
          <div class="obody">
            <div class="o oc-g"><span class="on"><svg width="14" height="18"><use href="#dia"/></svg>H1_CLK</span><span>0</span><span>Signal</span><span>Internal</span></div>
            <div class="o oc-g"><span class="on"><svg width="14" height="18"><use href="#dia"/></svg>SynchedTick</span><span>0</span><span>Signal</span><span>Internal</span></div>
            <div class="o oc-g"><span class="on"><i class="pm ob-pm">+</i><svg width="14" height="18"><use href="#dia"/></svg>latencyDataOut</span><span>UUUU...</span><span>Signal</span><span>Internal</span></div>
            <div class="o oc-g"><span class="on"><svg width="14" height="18"><use href="#dia"/></svg>LatencyCounterRead</span><span>1</span><span>Signal</span><span>Internal</span></div>
          </div>
        </div>
        <div class="pane pr">
          <div class="dockbar"><svg class="dk-ic" width="14" height="20"><use href="#gearp" x="0" y="0"/></svg><span class="dk-t">Processes (In Region)</span><div class="grip"><b class="dots"></b></div><b class="db">+</b><b class="db">&#8599;</b><b class="db">X</b></div>
          <div class="hd pc"><span><i class="flt"></i>Name</span><span>Type (filtered)</span><span>State</span><span>Order</span><span>Pare</span></div>
          <div class="pbody">
            <div class="p1 pc"><span class="on"><svg width="14" height="16"><use href="#ball"/></svg>line__61</span><span>VHDL Process</span><span>Done</span><span>-</span><span>/tb_</span></div>
            <div class="p1 pc"><span class="on"><svg width="14" height="16"><use href="#ball"/></svg>line__68</span><span>VHDL Process</span><span>Done</span><span>-</span><span>/tb_</span></div>
          </div>
          <div class="hsb"><i class="la">&#9664;</i><i class="th th-pr"></i><i class="ra">&#9654;</i></div>
        </div>
      </div>
      <div class="pane wv wva">
        <div class="dockbar"><svg class="dk-ic" width="16" height="16"><use href="#wic" x="1" y="1"/></svg><span class="dk-t">Wave - Default</span><div class="grip"><b class="dots"></b></div><b class="db">+</b><b class="db">&#8599;</b><b class="db">X</b></div>
        <div class="wgrid whead"><div class="gr"><svg width="36" height="19"><use href="#objs" transform="translate(8 0) scale(.8)"/><use href="#dd" x="24" y="12"/></svg></div><div class="gr hdm">Msgs</div><div class="bk"><i class="curs"></i></div><div class="gr sbh"></div></div>
        <div class="wgrid wmain">
          <div class="gr ncol">
            <div class="wr"><svg width="14" height="16"><use href="#dia" y="-1"/></svg>/tb_latencycounter/H1_CLK</div>
            <div class="wr"><svg width="14" height="16"><use href="#dia" y="-1"/></svg>/tb_latencycounter/SynchedTick</div>
            <div class="wr"><i class="pm">+</i><svg width="14" height="16"><use href="#dia" y="-1"/></svg>/tb_latencycounter/latencyDataOut</div>
            <div class="wr"><svg width="14" height="16"><use href="#dia" y="-1"/></svg>/tb_latencycounter/LatencyCounterRead</div>
            <i class="endl"></i>
          </div>
          <div class="gr mcol"><div class="wm">0</div><div class="wm">0</div><div class="wm">UUU...</div><div class="wm">0</div><i class="endl"></i></div>
          <div class="bk grid-a">
            <svg class="trace" width="610" height="608" shape-rendering="crispEdges">
              <path d="M4 16H607M4 33H15V21H26V33H607M4 67H38V55H607" fill="none" stroke="#30e830"/>
              <path d="M4 38H607M4 50H607" fill="none" stroke="#e01010"/>
              <text x="8" y="49" class="bus" textLength="224" lengthAdjust="spacingAndGlyphs">UUUUUUUUUUUUUUUUUUUUUUUUUUUU</text>
              <path d="M3 0V608" stroke="#ffcc00" stroke-width="2"/>
            </svg>
          </div>
          <div class="vsb"><i class="up-btn">&#9650;</i><b></b><i class="up-btn">&#9660;</i></div>
        </div>
        <div class="wgrid wscale">
          <div class="gr sc-n"><div class="sn"><svg width="30" height="20"><circle cx="26" cy="9" r="5" fill="#8dcf8d" stroke="#ccc"/><rect x="12" y="4" width="10" height="12" fill="#9cc0e8" stroke="#fff"/><path d="M5 14l3-9 2 9" stroke="#9ab" fill="none"/></svg><span>Now</span></div><div class="sn2"><svg width="38" height="17"><rect x="3" y="7" width="9" height="10" fill="#eab040"/><path d="M6 7V3h3v4" stroke="#ccc" fill="none"/><path d="M14 16l6-12" stroke="#9bd" stroke-width="2"/><circle cx="26" cy="8" r="5" fill="#e06060" stroke="#ddd"/></svg><span class="curv">Cursor 1</span></div></div>
          <div class="gr sc-m"><div>500 ns</div><div class="wh">.00 ns</div></div>
          <div class="bk sc-w"><div class="ruler"><span>0 ns</span><span>100 ns</span><span>200 ns</span><span>300 ns</span><span>400 ns</span><span>500 ns</span></div><div class="cur-r"><span>0.00 ns</span></div></div>
          <div class="gr sbh"></div>
        </div>
        <div class="wgrid wscr">
          <div class="hsb2"><i class="la">&#9664;</i><b class="lt"></b><i class="la">&#9654;</i></div><div class="hsb2 m2"><i class="la">&#9664;</i><i class="la">&#9654;</i></div><div class="hsb2 ws3"><i class="la dk2">&#9664;</i><i class="mini"></i><b class="dkk"></b><i class="la dk2">&#9654;</i></div><div></div>
        </div>
        <div class="find"><b class="db fx">X</b><span>Find:</span><div class="fin"><svg width="16" height="20"><use href="#bino" transform="scale(.8)"/><use href="#dd" x="9" y="18"/></svg></div><i class="fb"><svg width="16" height="20"><circle cx="8" cy="10" r="6" fill="#e8f0fa" stroke="#a0b8d8"/><path d="M7 7l3 3-3 3" fill="none" stroke="#6090d0"/></svg></i><i class="fb"><svg width="16" height="20"><path d="M8 1v14" stroke="#30a030" stroke-width="3"/><path d="M3 12l5 7 5-7z" fill="#30a030"/></svg></i><i class="fb"><svg width="16" height="20"><rect x="2" y="1" width="12" height="18" fill="#fff" stroke="#555" stroke-dasharray="1 1"/><path d="M5 5h6M5 14h6" stroke="#c33"/></svg></i><i class="fsep"></i><span class="sfor">Search For</span><em class="sarr">&#9660;</em><i class="fsep"></i><i class="chk"></i><span class="at">(a)</span><i class="chk on2">&#10003;</i><svg width="16" height="20"><rect x="1" y="4" width="13" height="14" fill="#cde8fa" stroke="#27c"/><path d="M7 1v11M4 9l3 4 3-4" stroke="#14c" fill="none"/></svg></div>
      </div>
    </div>
    <div class="trans">
      <div class="dockbar active"><svg class="dk-ic" width="14" height="18"><path d="M2 18V5a5 5 0 0 1 10 0v13h-3V7H5v11z" fill="#666"/></svg><span class="dk-t">Transcript</span><div class="grip left"><b class="dots"></b></div><b class="db">+</b><b class="db">&#8599;</b><b class="db">X</b></div>
      <div class="tbody"><div class="ttxt"><p><span class="pr-t">VSIM 321&gt;</span> run 500 ns</p><p class="er"># ** Error: Test1 failed</p></div><div class="tsb"><i class="up-btn">&#9650;</i></div></div>
    </div>
  </div>
</section>

<!-- ModelSim right -->
<section class="win ms mc">
  <div class="ms-title"><span class="mlogo">M</span><span>ModelSim Microsemi Pro 2022.2</span></div>
  <nav class="menu msm"><span>File</span><span>Edit</span><span>View</span><span>Compile</span><span>Simulate</span><span>Add</span><span>Wave</span><span>Tools</span><span>Layout</span><span>Bookmarks</span><span>Window</span><span>Help</span></nav>
  <div class="tbr"><div class="tg"><svg width="365" height="31"><use href="#g-file"/><use href="#mlg" x="341" y="6"/></svg></div><div class="tg"><svg width="141" height="31"><use href="#g-nav1"/></svg><div class="spin">100 ps</div><svg width="218" height="31"><use href="#g-nav2"/></svg></div><div class="tg"><svg width="118" height="31"><use href="#g-gear"/></svg></div><div class="tg"><svg width="107" height="31"><use href="#g-xx"/></svg></div><div class="tg"><svg width="125" height="31"><use href="#g-help"/></svg></div><div class="tg"><svg width="175" height="31"><use href="#g-step"/></svg></div><div class="tg lay"><span>Layout</span><div class="combo">Simulate</div><i class="cdrop">&#9660;</i></div><div class="tg"><svg width="153" height="31"><use href="#g-lay"/></svg></div></div>
  <div class="tbr r2"><div class="tg"><svg width="167" height="31"><use href="#g-pins"/></svg></div><div class="tg"><svg width="179" height="31"><use href="#g-sel"/></svg></div><div class="tg"><svg width="191" height="31"><use href="#g-flag"/></svg></div><div class="tg far"><svg width="192" height="31"><use href="#g-wave"/></svg></div></div>
  <div class="dk">
    <div class="dk-row">
      <div class="pane sim">
        <div class="dockbar"><svg class="dk-ic" width="16" height="18"><use href="#cart"/></svg><span class="dk-t">sim - Default</span><div class="grip"><b class="dots"></b></div><b class="db">+</b><b class="db">&#8599;</b><b class="db">X</b></div>
        <div class="hd sc"><span><i class="flt"></i>Instance</span><span>Design unit</span><span>Design unit type</span><span>Top Category</span><span>Visi</span></div>
        <div class="sbody">
          <div class="r sc sel-r"><span class="t0"><i class="pm">-</i><svg class="cb" width="11" height="15"><use href="#cube"/></svg>tb_mdtssiroute</span><span>tb_mdtssir...</span><span>Architecture</span><span>DU Instance</span><span>+ac</span></div>
          <div class="r sc"><span class="t1 lk"><i class="pm">+</i><svg class="cb" width="11" height="15"><use href="#cube"/></svg>DUT</span><span>mdtssirout...</span><span>Architecture</span><span>DU Instance</span><span>+ac</span></div>
          <div class="r sc"><span class="t1 lk end"><svg class="bl" width="14" height="16"><use href="#ball"/></svg>line__52</span><span>tb_mdtssir...</span><span>Process</span><span>-</span><span>+ac</span></div>
          <div class="r sc"><span class="t0"><svg class="cb" width="11" height="15"><use href="#cube"/></svg>standard</span><span>standard</span><span>Package</span><span>Package</span><span>+ac</span></div>
          <div class="r sc"><span class="t0"><svg class="cb" width="11" height="15"><use href="#cube"/></svg>textio</span><span>textio</span><span>Package</span><span>Package</span><span>+ac</span></div>
          <div class="r sc"><span class="t0"><svg class="cb" width="11" height="15"><use href="#cube"/></svg>std_logic_1164</span><span>std_logic_1...</span><span>Package</span><span>Package</span><span>+ac</span></div>
          <div class="r sc"><span class="t0"><svg class="cb" width="11" height="15"><use href="#cube"/></svg>std_logic_arith</span><span>std_logic_a...</span><span>Package</span><span>Package</span><span>+ac</span></div>
          <div class="r sc"><span class="t0"><svg class="cb" width="11" height="15"><use href="#cube"/></svg>std_logic_unsigned</span><span>std_logic_u...</span><span>Package</span><span>Package</span><span>+ac</span></div>
        </div>
      </div>
      <div class="oc occ">
        <div class="pane ob">
          <div class="dockbar"><svg class="dk-ic" width="18" height="22"><use href="#objs"/></svg><span class="dk-t">Objects</span><div class="grip"><b class="dots"></b></div><b class="db">+</b><b class="db">&#8599;</b><b class="db">X</b></div>
          <div class="hd oc-g rel"><span><i class="flt"></i>Name</span><span>Value</span><span>Kind</span><span>Mo</span><div class="nowbar"><i>&#8676;</i><i class="ord"></i><span>Now</span><i>&#8677;</i></div><i class="nowarr">&#9654;</i></div>
          <div class="obody osel">
            <div class="o oc-g"><span class="on"><i class="pm ob-pm">+</i><svg width="14" height="18"><use href="#dia"/></svg>SSISelect</span><span>11</span><span>Signal</span><span>Internal</span></div>
            <div class="o oc-g"><span class="on"><svg width="14" height="18"><use href="#dia"/></svg>M_AX0_INT_CLK</span><span>0</span><span>Signal</span><span>Internal</span></div>
            <div class="o oc-g"><span class="on"><svg width="14" height="18"><use href="#dia"/></svg>M_AX1_INT_CLK</span><span>0</span><span>Signal</span><span>Internal</span></div>
            <div class="o oc-g"><span class="on"><svg width="14" height="18"><use href="#dia"/></svg>M_AX0_SSI_CLK</span><span>0</span><span>Signal</span><span>Internal</span></div>
            <div class="o oc-g"><span class="on"><svg width="14" height="18"><use href="#dia"/></svg>M_AX1_SSI_CLK</span><span>0</span><span>Signal</span><span>Internal</span></div>
            <div class="o oc-g"><span class="on"><svg width="14" height="18"><use href="#dia"/></svg>M_AX0_MDT_INT</span><span>1</span><span>Signal</span><span>Internal</span></div>
            <div class="o oc-g"><span class="on"><svg width="14" height="18"><use href="#dia"/></svg>M_AX1_MDT_INT</span><span>1</span><span>Signal</span><span>Internal</span></div>
          </div>
        </div>
        <div class="pane pr">
          <div class="dockbar"><svg class="dk-ic" width="14" height="20"><use href="#gearp"/></svg><span class="dk-t">Processes (In Region)</span><div class="grip"><b class="dots"></b></div><b class="db">+</b><b class="db">&#8599;</b><b class="db">X</b></div>
          <div class="hd pc"><span><i class="flt"></i>Name</span><span>Type (filtered)</span><span>State</span><span>Order</span><span>Pare</span></div>
          <div class="pbody">
            <div class="p1 pc"><span class="on"><svg width="14" height="16"><use href="#ball"/></svg>line__52</span><span>VHDL Process</span><span>Done</span><span>-</span><span>/tb_</span></div>
          </div>
        </div>
      </div>
      <div class="pane wv wvc">
        <div class="dockbar active"><svg class="dk-ic" width="16" height="16"><use href="#wic" x="1" y="1"/></svg><span class="dk-t">Wave - Default</span><div class="grip"><b class="dots"></b></div><b class="db">+</b><b class="db">&#8599;</b><b class="db">X</b></div>
        <div class="wgrid whead"><div class="gr"><svg width="36" height="19"><use href="#objs" transform="translate(8 0) scale(.8)"/><use href="#dd" x="24" y="12"/></svg></div><div class="gr hdm">Msgs</div><div class="bk"><i class="curs"></i></div></div>
        <div class="wgrid wmain">
          <div class="gr ncol">
            <div class="wr"><i class="pm">+</i><svg width="14" height="16"><use href="#dia" y="-1"/></svg>/tb_mdtssiroute/SSISelect</div>
            <div class="wr"><svg width="14" height="16"><use href="#dia" y="-1"/></svg>/tb_mdtssiroute/M_AX0_INT_CLK</div>
            <div class="wr"><svg width="14" height="16"><use href="#dia" y="-1"/></svg>/tb_mdtssiroute/M_AX1_INT_CLK</div>
            <div class="wr"><svg width="14" height="16"><use href="#dia" y="-1"/></svg>/tb_mdtssiroute/M_AX0_SSI_CLK</div>
            <div class="wr"><svg width="14" height="16"><use href="#dia" y="-1"/></svg>/tb_mdtssiroute/M_AX1_SSI_CLK</div>
            <div class="wr"><svg width="14" height="16"><use href="#dia" y="-1"/></svg>/tb_mdtssiroute/M_AX0_MDT_INT</div>
            <div class="wr"><svg width="14" height="16"><use href="#dia" y="-1"/></svg>/tb_mdtssiroute/M_AX1_MDT_INT</div>
          </div>
          <div class="gr mcol"><div class="wm">00</div><div class="wm">1</div><div class="wm">1</div><div class="wm">0</div><div class="wm">0</div><div class="wm">1</div><div class="wm">1</div></div>
          <div class="bk grid-c">
            <svg class="trace" width="608" height="588" shape-rendering="crispEdges">
              <path d="M3 5H606M3 17H606" stroke="#a8f0a8" fill="none"/>
              <path d="M5 5v12M13 5v12M25 5v12M38 5v12" stroke="#a8f0a8"/>
              <text x="43" y="15" class="bus">11</text>
              <path d="M4 22H13V34H25V22H37V34H606M4 39H26V51H606M3 68H606M3 85H606M3 90H606M3 107H606" fill="none" stroke="#30e830"/>
              <path d="M3 8V110" stroke="#e03030"/>
              <path d="M3 0V588" stroke="#ffcc00" stroke-width="2"/>
            </svg>
          </div>
        </div>
      </div>
    </div>
  </div>
</section>
</body>
</html>
```
FILE: styles.css
```css
*{box-sizing:border-box}
html,body{margin:0;padding:0}
body{width:3840px;height:1200px;overflow:hidden;position:relative;background:#efefef;font:12px/1.2 Roboto,"Liberation Sans",sans-serif;color:#000}
p{margin:0}
i,em,b{font-style:normal;font-weight:normal}
svg{overflow:visible;flex:none}
.defs{position:absolute}
.gh{opacity:.45;filter:saturate(.5)}

.backstrip{position:absolute;left:0;top:0;width:8px;height:290px;background:#e0e0e0;border-right:1px solid #808080}
.dash{display:block;margin:4px 0 0 3px;height:2px;width:14px;background:#1414d0}
.vtrack{position:absolute;right:0;top:170px;width:20px;height:1030px;background:linear-gradient(#cdcdcd 0,#cdcdcd 285px,#f0f0f0 285px,#f0f0f0 515px,#cdcdcd 515px)}

.win{position:absolute;background:#fff;overflow:hidden;display:flex;flex-direction:column}
.w1{left:8px;top:5px;width:1920px;height:280px;z-index:3;border-top:1px solid #777;border-left:1px solid #888}
.pa{left:1920px;top:0;width:1920px;height:176px;z-index:1;border-bottom:6px solid #c4d0e0}
.pb2{left:1920px;top:285px;width:1920px;height:170px;z-index:4}
.mb{left:1923px;top:176px;width:1897px;height:109px;z-index:1}
.ma{left:0;top:285px;width:1920px;height:915px;z-index:2}
.mc{left:1920px;top:461px;width:1900px;height:739px;z-index:2;border-left:3px solid #bcc8dc}
.sliver{position:absolute;left:1920px;top:455px;width:1920px;height:6px;background:#fff;overflow:hidden;z-index:1;font-size:12px;letter-spacing:-.35px}
.sliver span{position:absolute;left:65px;top:-7px}
.sliver i{position:absolute;left:383px;top:0;width:1517px;height:6px;background:#000 linear-gradient(#f00,#f00) 0 2px/572px 1px no-repeat}

/* title bars */
.tb-title{display:flex;align-items:center;height:28px;padding-left:8px;gap:5px;font-size:12px}
.ttl-ic{margin-top:2px}
.ctl{margin-left:auto;display:flex;align-items:center;position:relative;height:100%}
.ctl i{display:block;position:absolute}
.mn{width:10px;height:1px;background:#333}
.mx{width:9px;height:11px;border:1px solid #111}
.rs{width:8px;height:10px;border:1px solid #666;box-shadow:2px -2px 0 -1px #fff,2px -2px 0 0 #666}
.cl{font-size:14px;line-height:14px;font-weight:300;color:#333}
.tb-title .mn{right:104px}.tb-title .mx{right:59px}.tb-title .cl{right:13px}
.pctl .mn{right:144px;background:#777}.pctl .rs{right:87px}.pctl .cl{right:25px;color:#666;font-size:17px}
.rs.dark{border-color:#111;box-shadow:2px -2px 0 -1px #fff,2px -2px 0 0 #111}
.mn.dark{background:#111}
.mctl .mn{right:111px}.mctl .rs{right:67px}.mctl .cl{right:22px}

.menu{display:flex;font-size:12px;align-items:center;background:#fff}
.tallm{height:22px;padding-left:6px;gap:13px}
.msm{height:21px;padding-left:7px;gap:13px;margin-bottom:1px}
.ms-title{display:flex;align-items:center;height:23px;gap:8px;padding-left:3px;font-size:12px}
.mb .ms-title,.mb .msm,.mc .ms-title,.mc .msm{padding-left:3px}
.mlogo{display:block;width:14px;height:15px;border-top:2px solid #1414d0;font:900 14px/13px "Liberation Sans",sans-serif;text-align:center;margin-top:2px}

/* toolbars */
.tbr{display:flex;gap:2px;height:32px;background:#f0f0f0;padding-left:3px;border-top:1px solid #d8d8d8;flex:none}
.tbr.r2{height:33px}
.w1-r{padding-left:3px}
.g0{margin-right:0}
.tg{display:flex;align-items:flex-start;height:31px;border-right:1px solid #808080;border-bottom:1px solid #808080;background:linear-gradient(#666,#666) 3px 3px/1px 25px no-repeat}
.spin{width:58px;height:22px;margin-top:5px;background:#fff;font-size:12px;line-height:22px;text-align:center;word-spacing:2px}
.far{margin-left:519px}
.dim svg{opacity:.55;filter:saturate(.6)}
.lay{align-items:center;padding-left:13px;width:206px}
.lay>span{width:39px;font-size:12px}
.combo{width:122px;height:19px;margin-left:1px;background:#f0f0f0;border:1px solid #bbb;border-right-color:#eee;border-bottom-color:#fff;font:12px/18px "Liberation Mono",monospace;padding-left:1px}
.cdrop{width:17px;height:19px;margin-left:3px;background:#fff;border-right:1px solid #666;border-bottom:1px solid #666;font-size:11px;line-height:18px;text-align:center}
.srch{width:43px;color:#808080;font-size:12px;padding-top:9px}
.sinput{width:115px;height:19px;margin:9px 3px 0 0;background:#f0f0f0;border:1px solid #ccc}

/* dockable title */
.dockbar{display:flex;align-items:center;height:20px;padding:0 2px;background:#f0f0f0;border-top:1px solid #d0d0d0;flex:none;font-size:12px}
.active{background:#9db8d4}
.w1-dock{height:20px;margin-left:3px}
.dk-ic{margin-right:3px;flex:none}
.dk-t{white-space:nowrap;margin-right:4px;font-size:12px;letter-spacing:-.2px}
.grip{flex:1;height:8px;margin:0 4px 0 0;position:relative;background:linear-gradient(#909090,#909090) 0 0/100% 1px no-repeat,linear-gradient(#fff,#fff) 0 2px/100% 2px no-repeat,linear-gradient(#909090,#909090) 0 5px/100% 1px no-repeat;display:flex;justify-content:center}
.active .grip{background:linear-gradient(#000,#000) 0 0/100% 1px no-repeat,linear-gradient(#d8ecff,#d8ecff) 0 2px/100% 2px no-repeat,linear-gradient(#000,#000) 0 5px/100% 1px no-repeat}
.grip.left{justify-content:flex-start}
.grip.left .dots{margin-left:1000px}
.dots{display:block;width:20px;height:11px;margin-top:-2px;background:#f0f0f0 radial-gradient(#444 .7px,transparent .8px) 0 0/3px 3px}
.active .dots{background-color:#9db8d4}
.db{display:block;width:14px;height:17px;margin-left:2px;background:#fff;border-right:1px solid #666;border-bottom:1px solid #666;font:700 13px/16px "Liberation Sans",sans-serif;text-align:center;flex:none}

/* Wave window */
.w1-gap{height:4px;background:#f0f0f0;flex:none;border-bottom:1px solid #ddd}
.w1-main{display:flex;flex:1;min-height:0;background:#fff}
.w1-names{width:325px;margin-left:3px;border-right:1px solid #808080}
.w1-hd{height:19px}
.gray{background:#808080;color:#fff}
.blk{background:#000}
.hdm{text-align:right;padding-right:3px;color:#fff;font-size:12px;line-height:19px;letter-spacing:-.2px}
.w1-rows{height:128px;overflow:hidden;border-top:2px solid #f0f0f0;display:flex;flex-direction:column;justify-content:flex-end}
.w1r{height:17px;flex:none;display:flex;align-items:center;margin-left:8px;padding-left:20px;gap:5px;border-bottom:1px solid #808080;font-size:11.5px;letter-spacing:-.35px}
.w1-msgs{width:40px;margin-left:3px;margin-right:3px;border-right:1px solid #808080}
.w1m{height:17px;flex:none;border-bottom:1px solid #808080;line-height:16px;font-size:12px;padding-left:1px}
.w1-wave{width:1527px}
.grid1{height:120px;margin-top:2px;background:#000 linear-gradient(90deg,#707070 1px,transparent 1px) 51.3px 0/58.47px 100%}
.trace{display:block}
.w1-sb{flex:1;background:#fff}
.w1-sbh{height:19px;background:#808080;margin-bottom:5px}
.up-btn{display:block;width:100%;height:15px;background:#f0f0f0;border-bottom:2px solid #aaa;font-size:8px;line-height:14px;text-align:center}

/* Paint */
.p-title{display:flex;align-items:center;height:29px;color:#666;flex:none}
.p-sep{display:block;width:1px;height:19px;background:#999}
.s1{margin-left:6px}
.qs{margin-left:15px}
.qu{margin-left:8px}
.qr{margin-left:8px}
.qmore{font-size:10px;color:#000;margin-left:8px;width:10px}
.s2{margin-left:11px}
.p-name{font-size:16px;margin-left:6px}
.p-tabs{display:flex;align-items:stretch;height:29px;position:relative;border-bottom:1px solid #dadbdc;font-size:15px;flex:none}
.p-file{width:70px;background:#1a72c4;color:#fff;text-align:center;line-height:28px}
.p-home{width:69px;background:#fff;border:1px solid #dadbdc;border-bottom:0;height:29px;text-align:center;line-height:28px;color:#333}
.p-view{margin-left:18px;line-height:28px;color:#333}
.p-caret{position:absolute;right:28px;top:4px;color:#888;font-size:17px}
.p-help{position:absolute;right:3px;top:4px;width:20px;height:20px;border-radius:50%;background:#0a62bc;color:#fff;text-align:center;line-height:20px;font-size:14px}
.ribbon{flex:1;display:flex;background:#f5f6f7;font-size:14px;color:#3b3b3b;min-height:0}
.rg{display:flex;flex-direction:column;border-right:1px solid #e2e4e7;height:107px;margin-top:2px}
.rc{flex:1;display:flex;min-height:0;position:relative}
.rl{height:21px;text-align:center;color:#6a6a6a;font-size:14px;flex:none}
.r1{width:124px}
.r2{width:141px}
.r3{width:96px}.r4{width:63px}.r5{width:285px}.r6{width:63px}.r7{width:434px}.r8{width:66px}
.big{display:flex;flex-direction:column;align-items:center;text-align:center;line-height:18px}
.big em{font-size:10px;line-height:14px}
.bp{width:60px;padding-top:6px;margin-left:1px}
.bp span{margin-top:5px}
.sm{display:flex;flex-direction:column;font-size:14px}
.sm p{display:flex;align-items:center;gap:3px;height:26px}
.sm em{font-size:9px;margin-left:2px}
.off{color:#8a8a8a}
.r1 .sm{padding-top:6px;margin-left:1px}
.sel{width:49px;height:81px;margin:2px 0 0 6px;border:1px solid #7eb4ea;background:#c9e0f7;display:flex;flex-direction:column;align-items:center;flex:none}
.sel-top{height:45px;width:100%;border-bottom:1px solid #7eb4ea;display:flex;align-items:center;justify-content:center}
.sel-top i{width:34px;height:26px;border:1px dotted #1f4f8f}
.sel-bot{display:flex;flex-direction:column;align-items:center;padding-top:2px;line-height:17px}
.sel-bot em{font-size:10px}
.r2 .sm{margin-left:4px;padding-top:3px}
.tools{display:grid;grid-template-columns:repeat(3,27px);grid-template-rows:36px 36px;padding:15px 0 0 10px}
.bb{width:62px;padding-top:4px}
.bb span,.bs span{margin-top:7px}
.gal{width:171px;height:74px;margin:5px 0 0 5px;background:#fdfeff;border:1px solid #e0e4ea;overflow:hidden}
.galb{width:17px;height:74px;margin-top:5px;border:1px solid #e0e4ea;display:flex;flex-direction:column;font-size:7px;text-align:center;color:#666;line-height:24px}
.galb i{height:24px}
.out{margin-left:6px;padding-top:5px}
.bs{width:62px;padding-top:8px}
.lines{width:40px;display:flex;flex-direction:column;gap:6px}
.lines i{display:block;background:#7a8eaa}
.lines i:nth-child(1){height:1px}.lines i:nth-child(2){height:3px}.lines i:nth-child(3){height:4px}.lines i:nth-child(4){height:8px}
.bs span{margin-top:10px}
.col1{width:50px;height:81px;margin:2px 0 0 4px;border:1px solid #7eb4ea;background:#c9e0f7;text-align:center;line-height:17px;flex:none}
.swat{display:block;width:35px;height:37px;margin:4px auto 4px;background:#000;border:2px solid #f0f4f8;outline:1px solid #888}
.col2{width:50px;margin:2px 0 0 0;text-align:center;line-height:17px;flex:none}
.swat2{display:block;width:30px;height:30px;margin:7px auto 7px;background:#fff;border:1px solid #aaa}
.pal{display:grid;grid-template-columns:repeat(10,25px);grid-template-rows:24px 25px 26px;gap:2px;margin:3px 0 0 1px;height:80px}
.pal i{display:block;border:2px solid #fff;outline:1px solid #b4b4b4;outline-offset:-1px}
.pal i:nth-child(1){background:#000}.pal i:nth-child(2){background:#7f7f7f}.pal i:nth-child(3){background:#880015}.pal i:nth-child(4){background:#ed1c24}.pal i:nth-child(5){background:#ff7f27}.pal i:nth-child(6){background:#fff200}.pal i:nth-child(7){background:#22b14c}.pal i:nth-child(8){background:#00a2e8}.pal i:nth-child(9){background:#3f48cc}.pal i:nth-child(10){background:#a349a4}
.pal i:nth-child(11){background:#fff}.pal i:nth-child(12){background:#c3c3c3}.pal i:nth-child(13){background:#b97a57}.pal i:nth-child(14){background:#ffaec9}.pal i:nth-child(15){background:#ffc90e}.pal i:nth-child(16){background:#efe4b0}.pal i:nth-child(17){background:#b5e61d}.pal i:nth-child(18){background:#99d9ea}.pal i:nth-child(19){background:#7092be}.pal i:nth-child(20){background:#c8bfe7}
.pal i:nth-child(n+21){background:#f5f6f7}
.be{width:58px;padding-top:6px;flex:none}
.be span{margin-top:8px;line-height:18px}
.r7 .be{margin-left:4px}
.rlc{padding-right:33px}

/* ModelSim dock */
.dk{flex:1;display:flex;flex-direction:column;background:#c8c8c8;min-height:0;padding-top:1px}
.dk-row{flex:1;display:flex;min-height:0;padding-left:3px}
.pane{display:flex;flex-direction:column;background:#f0f0f0;min-height:0}
.sim{width:520px;flex:none}
.oc{width:376px;margin-left:8px;flex:none;display:flex;flex-direction:column}
.mc .oc{margin-left:9px}
.wv{flex:1;min-width:0;margin-left:11px;margin-right:2px}
.mc .wv{margin-left:10px;margin-right:0}
.hd{display:grid;height:18px;background:#f0f0f0;border-bottom:2px solid #909090;line-height:17px;font-size:11.5px;letter-spacing:-.2px;flex:none}
.hd span{border-left:1px solid #ccc;padding-left:2px;white-space:nowrap;overflow:hidden}
.hd span:first-child{border-left:0;padding-left:0;display:flex;align-items:center}
.flt{display:block;width:0;height:0;margin:0 3px 0 5px;border:4px solid transparent;border-top:9px solid #666;border-bottom:0}
.sc{grid-template-columns:235px 71px 96px 96px 1fr}
.sbody{flex:1;background:#fff;padding-top:3px;min-height:0;font-size:11.5px;letter-spacing:-.3px}
.r{display:grid;height:16px;line-height:16px;white-space:nowrap;overflow:hidden}
.r>span{padding-left:2px;overflow:hidden}
.sel-r{background:#bccbdc}
.t0,.t1{display:flex;align-items:center}
.t0{padding-left:23px!important}
.t1{padding-left:40px!important}
.cb{margin-right:7px}
.bl{margin-right:5px;margin-left:-1px}
.pm{display:block;width:9px;height:10px;flex:none;background:#fff;border:1px solid #777;font:700 10px/8px "Liberation Sans",sans-serif;text-align:center;color:#000;letter-spacing:0}
.t0 .pm{margin-left:-17px;margin-right:8px;background:#e8e8e8}
.t1 .pm{margin-left:-15px;margin-right:6px}
.lk{background:linear-gradient(#999,#999) 30px 0/1px 100% no-repeat,linear-gradient(#999,#999) 30px 8px/9px 1px no-repeat}
.lk.end{background:linear-gradient(#999,#999) 30px 0/1px 9px no-repeat,linear-gradient(#999,#999) 30px 8px/9px 1px no-repeat}
.hsb{height:18px;background:#f0f0f0;display:flex;flex:none;border-bottom:1px solid #808080;background-image:radial-gradient(#ddd .5px,transparent .6px);background-size:2px 2px;font-size:8px}
.la,.ra{display:block;width:18px;background:#f8f8f8;border-right:1px solid #888;text-align:center;line-height:17px;flex:none}
.ra{margin-left:auto;border-left:1px solid #ddd;background:#fff}
.th{display:block;background:#f0f0f0;border-right:1px solid #888;border-bottom:1px solid #888}
.th-sim{width:228px}.th-pr{width:160px}
.tabs{height:23px;display:flex;background:#f0f0f0;border-top:2px solid #000;flex:none;font-size:12px;letter-spacing:-.2px;margin-top:2px}
.tab{width:78px;height:22px;margin-top:-2px;background:#c4c4c4;border-right:1px solid #888;border-bottom:2px solid #333;border-radius:0 0 3px 3px;display:flex;align-items:center;gap:3px;padding-left:4px}
.tab i{color:#aaa;font-weight:700;margin-left:auto;margin-right:3px}
.tab.act{width:58px;background:#f0f0f0;margin-left:1px}
.tabfill{flex:1}
.tscr{display:block;width:11px;background:#fff;border-right:1px solid #888;border-bottom:1px solid #888;text-align:center;line-height:18px;height:22px;margin-top:-2px}

.oca .ob{height:371px}
.occ .ob{height:368px}
.oca .pr{flex:1;margin-top:6px;min-height:0}
.occ .pr{flex:1;margin-top:11px;min-height:0}
.oc-g{grid-template-columns:189px 44px 38px 1fr}
.rel{position:relative}
.obody{flex:1;background:#4f5a8a;padding-top:2px;color:#fff;min-height:0;font-size:11.5px;letter-spacing:-.25px}
.o{display:grid;height:16px;line-height:16px;white-space:nowrap}
.o>span{padding-left:2px}
.on{display:flex;align-items:center;gap:4px;padding-left:22px!important}
.ob-pm{margin-left:-17px;margin-right:-1px;color:#000}
.osel{color:#000}
.osel .o{width:314px;background:#bccbdc;border-bottom:1px solid #4f5a8a}
.nowbar{position:absolute;left:289px;top:0;width:75px;height:16px;display:flex;align-items:center;background:#f0f0f0}
.nowbar i{display:block;width:15px;text-align:center;background:#fff;border-right:1px solid #777;height:16px;line-height:14px;font-size:12px}
.nowbar .ord{width:10px;height:11px;background:#ff8c00;margin:0 4px;border:1px solid #a60}
.nowbar span{color:#999;border:0;padding:0;width:30px;font-size:12px}
.nowarr{position:absolute;right:2px;top:1px;font-size:10px}
.pc{grid-template-columns:148px 104px 60px 43px 1fr}
.pbody{flex:1;background:#8ea4ff;color:#fff;padding-top:2px;min-height:0;font-size:11.5px;letter-spacing:-.25px}
.p1{display:grid;height:16px;line-height:16px;white-space:nowrap;overflow:hidden}
.p1>span{padding-left:2px}

/* wave pane */
.wgrid{display:grid;column-gap:2px;flex:none}
.wva .wgrid{grid-template-columns:320px 41px 611px 19px}
.wvc .wgrid{grid-template-columns:324px 42px 1fr}
.whead{height:19px;margin-top:1px}
.gr{background:#808080}
.bk{background:#000}
.curs{display:block;width:2px;height:100%;background:#fc0;margin-left:3px}
.sbh{background:#808080}
.wmain{flex:1!important;min-height:0;background:#fff;height:0}
.wva .wmain{height:610px;flex:none!important;padding-top:2px}
.ncol{border-left:7px solid #f0f0f0;position:relative;padding-top:2px;font-size:11.5px;letter-spacing:-.35px}
.wvc .ncol{border-left:12px solid #f0f0f0;padding-top:3px}
.wr{height:17px;display:flex;align-items:center;gap:5px;color:#fff;padding-left:21px;white-space:nowrap}
.wr .pm{margin-left:-15px;margin-right:-3px;width:9px}
.wvc .wr{color:#000;background:#fff;padding-left:18px;border-bottom:1px solid #808080}
.wvc .wr .pm{margin-left:-13px;margin-right:-1px}
.mcol{position:relative;padding-top:2px;font-size:11.5px;letter-spacing:-.2px}
.wvc .mcol{padding-top:3px}
.wm{height:17px;line-height:17px;color:#fff;padding-left:2px}
.wvc .wm{color:#000;background:#fff;border-bottom:1px solid #808080}
.endl{display:block;height:1px;background:#000;margin:1px 5px 0 3px}
.grid-a{background:#000 linear-gradient(90deg,#808080 1px,transparent 1px) 62px 0/58.6px 100%}
.grid-c{background:#000 linear-gradient(90deg,#808080 1px,transparent 1px) 60px 0/58.6px 100%}
.bus{fill:#e8f0ff;font-size:12px;font-family:Roboto,sans-serif}
.vsb{display:flex;flex-direction:column;background:#f0f0f0;height:100%}
.vsb b{flex:1;background:#fff}
.wscale{height:40px;margin-top:2px;border-top:1px solid #fff}
.sc-n{display:flex;flex-direction:column;color:#fff}
.sn,.sn2{display:flex;align-items:center;height:21px;padding-left:4px}
.sn span{margin-left:auto;margin-right:3px;font-size:12px;letter-spacing:-.2px}
.sn2{height:18px;color:#000;padding-left:8px;background:linear-gradient(90deg,#808080 47px,#fff 47px)}
.curv{margin-left:auto;margin-right:3px;font-size:12px;letter-spacing:-.2px}
.sc-m{font-size:12px;letter-spacing:-.2px;color:#fff;line-height:21px;white-space:nowrap;overflow:hidden}
.sc-m .wh{background:#fff;color:#000;height:18px;line-height:17px}
.sc-w{display:flex;flex-direction:column;color:#30e830;font-size:12px;letter-spacing:-.2px}
.ruler{height:21px;border-bottom:1px solid #777;margin:0 6px 0 3px;display:flex;padding-top:7px;line-height:14px;background:repeating-linear-gradient(90deg,#30e830 0 1px,transparent 1px 58.6px) 0 0/100% 8px no-repeat,repeating-linear-gradient(90deg,#30e830 0 1px,transparent 1px 5.86px) 0 2px/100% 6px no-repeat}
.ruler span{width:117.2px;text-align:right}
.ruler span:first-child{width:16px;text-align:left;padding-left:6px;white-space:nowrap}
.cur-r{flex:1;padding-left:3px;color:#fc0}
.cur-r span{display:block;width:41px;height:17px;border:1px solid #fc0;font-size:12px;line-height:15px;padding-left:1px;margin-top:1px}
.wscr{height:19px;margin-top:2px}
.hsb2{display:flex;background:#f0f0f0;font-size:8px;height:17px;margin-top:2px;border-bottom:1px solid #808080}
.hsb2 .la{color:#888}
.hsb2 .la:last-child{margin-left:auto;border-left:1px solid #ddd}
.hsb2 .lt{flex:1}
.ws3{background:#c4c4c4}
.dk2{color:#000!important;background:#fff}
.mini{display:block;width:8px;background:#f0f0f0;border-right:1px solid #888}
.dkk{flex:1}
.find{flex:1;min-height:27px;display:flex;align-items:center;font-size:12px;letter-spacing:-.2px;padding:0 0 4px 2px;margin-top:2px;background:#f0f0f0;gap:3px}
.fx{margin:0}
.fin{width:680px;height:20px;background:#fff;border-left:1px solid #aaa;margin-left:6px;padding-left:3px}
.fb{display:block;width:19px;height:20px;background:#fff;border-right:1px solid #888;border-bottom:1px solid #888;padding-left:1px}
.fsep{display:block;height:20px;border-left:1px dotted #333;margin:0 5px}
.sfor{white-space:nowrap}
.sarr{font-size:10px;margin-left:4px}
.chk{display:block;width:12px;height:18px;margin-left:13px;background:#fff;border:1px solid #888;line-height:16px;text-align:center;font-size:12px}
.at{color:#a01020;margin:0 8px 0 5px}
.on2{margin-left:6px}
.trans{height:52px;flex:none;margin-top:8px;display:flex;flex-direction:column}
.tbody{flex:1;display:flex;background:#fff;border-top:1px solid #000;min-height:0}
.ttxt{flex:1;padding:3px 0 0 7px;border-left:1px solid #000;margin-left:4px;font:12px/15px "Liberation Mono",monospace;overflow:hidden}
.pr-t{color:#1010d0;font-family:Roboto,sans-serif}
.er{color:#1010d0}
.tsb{width:20px;background:#f0f0f0}
```
